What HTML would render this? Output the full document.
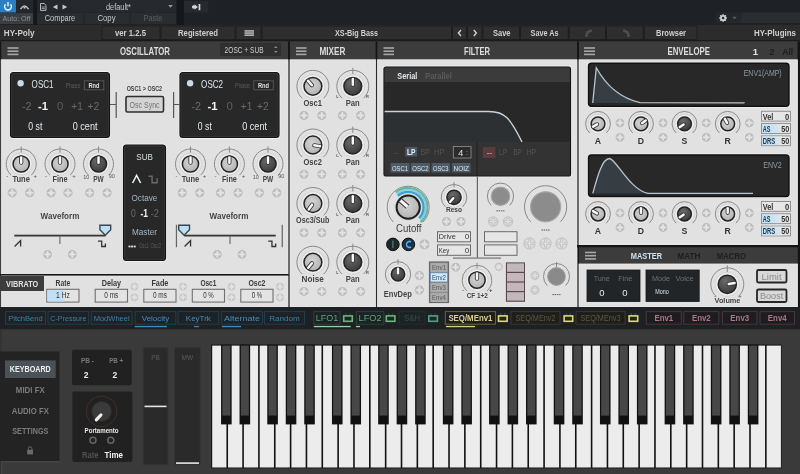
<!DOCTYPE html><html><head><meta charset="utf-8"><style>html,body{margin:0;padding:0;background:#3a3a3a;}svg{display:block;will-change:transform;font-family:"Liberation Sans",sans-serif;}</style></head><body><svg width="800" height="474" viewBox="0 0 800 474"><defs><radialGradient id="gl" cx="0.45" cy="0.4" r="0.75"><stop offset="0" stop-color="#d4d4d4"/><stop offset="1" stop-color="#aaaaaa"/></radialGradient><linearGradient id="gb" x1="0" x2="1" y1="0" y2="0"><stop offset="0" stop-color="#bfe0f7"/><stop offset="0.55" stop-color="#c8e3f5"/><stop offset="1" stop-color="#e6e6e6"/></linearGradient><radialGradient id="gd" cx="0.4" cy="0.3" r="0.8"><stop offset="0" stop-color="#6a6a6a"/><stop offset="1" stop-color="#363636"/></radialGradient></defs><rect x="0" y="0" width="800" height="474" fill="#3a3a3a"/>
<rect x="0" y="0" width="800" height="25" fill="#1e2226"/>
<rect x="0" y="0" width="16" height="12.5" fill="#2a7fc2"/>
<path d="M5.6,4.2 A3.4,3.4 0 1 0 10.4,4.2" fill="none" stroke="#eaf4fb" stroke-width="1.4"/>
<rect x="7.3" y="2" width="1.4" height="4.2" fill="#eaf4fb"/>
<rect x="16" y="0" width="17" height="12.5" fill="#24282c"/>
<path d="M20.5,9.2 Q24.5,2.6 28.5,9.2" fill="none" stroke="#c8c8c8" stroke-width="1.4"/>
<circle cx="24.5" cy="7.6" r="1.1" fill="#c8c8c8"/>
<rect x="0" y="13" width="33" height="11" fill="#3a3e41"/>
<text x="16.5" y="21.2" font-size="7.5" fill="#8c9094" font-weight="normal" text-anchor="middle" textLength="28" lengthAdjust="spacingAndGlyphs">Auto: Off</text>
<rect x="33.5" y="0" width="3.5" height="25" fill="#15181b"/>
<rect x="37" y="0" width="33" height="12.5" fill="#24282c"/>
<path d="M40.5,3.5 h3.6 l1.9,1.9 v5 h-5.5 z" fill="none" stroke="#b8b8b8" stroke-width="1"/>
<rect x="41.6" y="6.6" width="3.3" height="0.8" fill="#b8b8b8"/>
<rect x="41.6" y="8.3" width="3.3" height="0.8" fill="#b8b8b8"/>
<path d="M52.8,6.9 l4.7,-2.5 v5 z" fill="#c8c8c8"/>
<path d="M67.2,6.9 l-4.7,-2.5 v5 z" fill="#c8c8c8"/>
<rect x="70.5" y="0" width="106" height="12.5" fill="#262a2e"/>
<text x="118.5" y="9.6" font-size="8.5" fill="#c8c8c8" font-weight="normal" text-anchor="middle" textLength="25" lengthAdjust="spacingAndGlyphs">default*</text>
<path d="M168.2,5 h4.6 l-2.3,2.8 z" fill="#9a9a9a"/>
<rect x="37" y="13" width="46.5" height="11" fill="#292d30"/>
<text x="60" y="21.4" font-size="8.5" fill="#c9c9c9" font-weight="normal" text-anchor="middle" textLength="30.5" lengthAdjust="spacingAndGlyphs">Compare</text>
<rect x="84.5" y="13" width="45" height="11" fill="#292d30"/>
<text x="106.5" y="21.4" font-size="8.5" fill="#c9c9c9" font-weight="normal" text-anchor="middle" textLength="18" lengthAdjust="spacingAndGlyphs">Copy</text>
<rect x="130.5" y="13" width="46" height="11" fill="#292d30"/>
<text x="153" y="21.4" font-size="8.5" fill="#5a5e61" font-weight="normal" text-anchor="middle" textLength="19" lengthAdjust="spacingAndGlyphs">Paste</text>
<rect x="176.5" y="0" width="7.5" height="25" fill="#15181b"/>
<rect x="184" y="1" width="24.2" height="11.7" fill="#262a2e"/>
<circle cx="193.6" cy="7" r="1.7" fill="#d8d8d8"/>
<path d="M194.5,4.2 l3.4,2.8 l-3.4,2.8 z" fill="#d8d8d8"/>
<rect x="198.6" y="4" width="1.7" height="6.2" fill="#d8d8d8"/>
<rect x="716" y="12.5" width="25" height="10.5" fill="#24282c"/>
<circle cx="723.1" cy="18" r="2.2" fill="none" stroke="#cfcfcf" stroke-width="1.8"/>
<circle cx="723.1" cy="14.7" r="0.75" fill="#cfcfcf"/>
<circle cx="725.43" cy="15.67" r="0.75" fill="#cfcfcf"/>
<circle cx="726.4" cy="18.0" r="0.75" fill="#cfcfcf"/>
<circle cx="725.43" cy="20.33" r="0.75" fill="#cfcfcf"/>
<circle cx="723.1" cy="21.3" r="0.75" fill="#cfcfcf"/>
<circle cx="720.77" cy="20.33" r="0.75" fill="#cfcfcf"/>
<circle cx="719.8" cy="18.0" r="0.75" fill="#cfcfcf"/>
<circle cx="720.77" cy="15.67" r="0.75" fill="#cfcfcf"/>
<circle cx="723.1" cy="18" r="0.9" fill="#24282c"/>
<path d="M732.5,16.8 h4 l-2,2.4 z" fill="#5e6266"/>
<rect x="741.3" y="12.5" width="58.7" height="10.5" fill="#2a2e31"/>
<rect x="0" y="25" width="800" height="16" fill="#2c2c2c"/>
<rect x="0" y="40" width="800" height="1.5" fill="#1a1a1a"/>
<text x="3.8" y="36" font-size="9.3" fill="#cfcfcf" font-weight="bold" text-anchor="start" textLength="30.8" lengthAdjust="spacingAndGlyphs">HY-Poly</text>
<rect x="102.0" y="26" width="58.0" height="13.5" fill="#2e2e2e" stroke="#1e1e1e" stroke-width="1"/>
<rect x="161.0" y="26" width="74.0" height="13.5" fill="#2e2e2e" stroke="#1e1e1e" stroke-width="1"/>
<rect x="236.0" y="26" width="25.0" height="13.5" fill="#2e2e2e" stroke="#1e1e1e" stroke-width="1"/>
<rect x="262.0" y="26" width="189.5" height="13.5" fill="#2e2e2e" stroke="#1e1e1e" stroke-width="1"/>
<rect x="452.5" y="26" width="14" height="13.5" fill="#2e2e2e" stroke="#1e1e1e" stroke-width="1"/>
<rect x="467.5" y="26" width="14.5" height="13.5" fill="#2e2e2e" stroke="#1e1e1e" stroke-width="1"/>
<rect x="483.0" y="26" width="36.5" height="13.5" fill="#2e2e2e" stroke="#1e1e1e" stroke-width="1"/>
<rect x="520.5" y="26" width="47.75" height="13.5" fill="#2e2e2e" stroke="#1e1e1e" stroke-width="1"/>
<rect x="569.25" y="26" width="36.25" height="13.5" fill="#2e2e2e" stroke="#1e1e1e" stroke-width="1"/>
<rect x="606.5" y="26" width="36.75" height="13.5" fill="#2e2e2e" stroke="#1e1e1e" stroke-width="1"/>
<rect x="644.25" y="26" width="52.75" height="13.5" fill="#2e2e2e" stroke="#1e1e1e" stroke-width="1"/>
<text x="130.5" y="36.2" font-size="9.2" fill="#cfcfcf" font-weight="bold" text-anchor="middle" textLength="31" lengthAdjust="spacingAndGlyphs">ver 1.2.5</text>
<text x="198" y="36.2" font-size="9.2" fill="#cfcfcf" font-weight="bold" text-anchor="middle" textLength="40" lengthAdjust="spacingAndGlyphs">Registered</text>
<rect x="244.5" y="30.3" width="9.5" height="1.3" fill="#d2d2d2"/>
<rect x="244.5" y="32.4" width="9.5" height="1.3" fill="#d2d2d2"/>
<rect x="244.5" y="34.5" width="9.5" height="1.3" fill="#d2d2d2"/>
<text x="356.5" y="36.2" font-size="9.2" fill="#cfcfcf" font-weight="bold" text-anchor="middle" textLength="43" lengthAdjust="spacingAndGlyphs">XS-Big Bass</text>
<path d="M461,30 l-2.6,3 l2.6,3" fill="none" stroke="#d0d0d0" stroke-width="1.4"/>
<path d="M473.8,30 l2.6,3 l-2.6,3" fill="none" stroke="#d0d0d0" stroke-width="1.4"/>
<text x="501.75" y="36.2" font-size="9.2" fill="#cfcfcf" font-weight="bold" text-anchor="middle" textLength="17.5" lengthAdjust="spacingAndGlyphs">Save</text>
<text x="544.6" y="36.2" font-size="9.2" fill="#cfcfcf" font-weight="bold" text-anchor="middle" textLength="28" lengthAdjust="spacingAndGlyphs">Save As</text>
<path d="M586.5,37 q-0.5,-6 5.5,-6.5" fill="none" stroke="#4e4e4e" stroke-width="2.6"/>
<path d="M628.5,37 q0.5,-6 -5.5,-6.5" fill="none" stroke="#4e4e4e" stroke-width="2.6"/>
<text x="671" y="36.2" font-size="9.2" fill="#cfcfcf" font-weight="bold" text-anchor="middle" textLength="30" lengthAdjust="spacingAndGlyphs">Browser</text>
<text x="796" y="36.2" font-size="9.2" fill="#cfcfcf" font-weight="bold" text-anchor="end" textLength="42" lengthAdjust="spacingAndGlyphs">HY-Plugins</text>
<rect x="0" y="41.5" width="800" height="18" fill="#3c3c3c"/>
<rect x="288" y="41.5" width="2" height="266" fill="#151515"/>
<rect x="375.6" y="41.5" width="1.6999999999999886" height="266" fill="#151515"/>
<rect x="577" y="41.5" width="2" height="266" fill="#151515"/>
<rect x="0" y="41.5" width="1.2" height="266" fill="#151515"/>
<rect x="797.5" y="41.5" width="2.5" height="266" fill="#151515"/>
<rect x="7.5" y="47.2" width="11" height="1.6" fill="#a8a8a8"/>
<rect x="7.5" y="50.400000000000006" width="11" height="1.6" fill="#a8a8a8"/>
<rect x="7.5" y="53.6" width="11" height="1.6" fill="#a8a8a8"/>
<text x="145" y="55" font-size="10" fill="#dedede" font-weight="bold" text-anchor="middle" textLength="50" lengthAdjust="spacingAndGlyphs">OSCILLATOR</text>
<rect x="220" y="43" width="61" height="13" fill="#2f2f2f"/>
<text x="244.1" y="53" font-size="8.5" fill="#cfcfcf" font-weight="normal" text-anchor="middle" textLength="39" lengthAdjust="spacingAndGlyphs">2OSC + SUB</text>
<path d="M274,48 l1.8,-2 l1.8,2 z M274,51 l1.8,2 l1.8,-2 z" fill="#888"/>
<rect x="296" y="47.2" width="10.5" height="1.6" fill="#a8a8a8"/>
<rect x="296" y="50.400000000000006" width="10.5" height="1.6" fill="#a8a8a8"/>
<rect x="296" y="53.6" width="10.5" height="1.6" fill="#a8a8a8"/>
<text x="332.5" y="55" font-size="10" fill="#dedede" font-weight="bold" text-anchor="middle" textLength="26" lengthAdjust="spacingAndGlyphs">MIXER</text>
<rect x="383.5" y="47.2" width="10.5" height="1.6" fill="#a8a8a8"/>
<rect x="383.5" y="50.400000000000006" width="10.5" height="1.6" fill="#a8a8a8"/>
<rect x="383.5" y="53.6" width="10.5" height="1.6" fill="#a8a8a8"/>
<text x="477" y="55" font-size="10" fill="#dedede" font-weight="bold" text-anchor="middle" textLength="26" lengthAdjust="spacingAndGlyphs">FILTER</text>
<rect x="584" y="47.2" width="11" height="1.6" fill="#a8a8a8"/>
<rect x="584" y="50.400000000000006" width="11" height="1.6" fill="#a8a8a8"/>
<rect x="584" y="53.6" width="11" height="1.6" fill="#a8a8a8"/>
<text x="688.75" y="55" font-size="10" fill="#dedede" font-weight="bold" text-anchor="middle" textLength="42.5" lengthAdjust="spacingAndGlyphs">ENVELOPE</text>
<text x="755.5" y="55" font-size="9.5" fill="#d6e8f4" font-weight="bold" text-anchor="middle">1</text>
<text x="772" y="55" font-size="9.5" fill="#1f1f1f" font-weight="bold" text-anchor="middle">2</text>
<text x="787.75" y="55" font-size="9.5" fill="#1f1f1f" font-weight="bold" text-anchor="middle" textLength="11" lengthAdjust="spacingAndGlyphs">All</text>
<rect x="1.2" y="59.8" width="286.8" height="214.2" fill="#e1e1e1" stroke="#ececec" stroke-width="0.8"/>
<rect x="290" y="59.8" width="85.6" height="247.2" fill="#e1e1e1" stroke="#ececec" stroke-width="0.8"/>
<rect x="377.3" y="59.8" width="199.7" height="247.2" fill="#e1e1e1" stroke="#ececec" stroke-width="0.8"/>
<rect x="579" y="59.8" width="218.5" height="185.2" fill="#e1e1e1" stroke="#ececec" stroke-width="0.8"/>
<rect x="0" y="274" width="288" height="2" fill="#151515"/>
<rect x="1.2" y="276" width="286.8" height="31" fill="#e1e1e1" stroke="#ececec" stroke-width="0.8"/>
<rect x="577" y="245" width="221" height="2.5" fill="#151515"/>
<rect x="579" y="247.5" width="218.5" height="16.5" fill="#3c3c3c"/>
<rect x="579" y="264" width="218.5" height="43" fill="#e1e1e1" stroke="#ececec" stroke-width="0.8"/>
<rect x="0" y="307" width="800" height="22.3" fill="#1e2124"/>
<rect x="9.6" y="71.6" width="100.8" height="66.8" fill="none" stroke="#f6f6f6" stroke-width="0.9" rx="3.8"/>
<rect x="10.5" y="72.5" width="99" height="65" fill="#282828" stroke="#141414" stroke-width="1.2" rx="3"/>
<rect x="11.6" y="73.6" width="96.8" height="62.8" fill="none" stroke="#383838" stroke-width="0.8" rx="2.2"/>
<circle cx="20.6" cy="83.3" r="3.2" fill="#c9dbe6"/>
<text x="31.6" y="87.6" font-size="10.5" fill="#dfe6ea" font-weight="normal" text-anchor="start" textLength="22" lengthAdjust="spacingAndGlyphs">OSC1</text>
<text x="65.4" y="88" font-size="6.5" fill="#5b5b5b" font-weight="normal" text-anchor="start" textLength="15" lengthAdjust="spacingAndGlyphs">Phase</text>
<rect x="84.3" y="80.8" width="19.5" height="9" fill="#262626" stroke="#5a5a5a" stroke-width="0.9"/>
<text x="94.0" y="87.8" font-size="7" fill="#e2e2e2" font-weight="bold" text-anchor="middle" textLength="11" lengthAdjust="spacingAndGlyphs">Rnd</text>
<text x="26.8" y="109.6" font-size="11.5" fill="#6a6a6a" font-weight="normal" text-anchor="middle" textLength="9.6" lengthAdjust="spacingAndGlyphs">-2</text>
<text x="43.0" y="109.6" font-size="11.5" fill="#f2f2f2" font-weight="bold" text-anchor="middle" textLength="10" lengthAdjust="spacingAndGlyphs">-1</text>
<text x="60.2" y="109.6" font-size="11.5" fill="#5e5e5e" font-weight="normal" text-anchor="middle" textLength="6.3" lengthAdjust="spacingAndGlyphs">0</text>
<text x="77.0" y="109.6" font-size="11.5" fill="#6a6a6a" font-weight="normal" text-anchor="middle" textLength="11.4" lengthAdjust="spacingAndGlyphs">+1</text>
<text x="93.4" y="109.6" font-size="11.5" fill="#6a6a6a" font-weight="normal" text-anchor="middle" textLength="11.7" lengthAdjust="spacingAndGlyphs">+2</text>
<text x="35.3" y="129.8" font-size="10.5" fill="#e6ecf0" font-weight="normal" text-anchor="middle" textLength="14" lengthAdjust="spacingAndGlyphs">0 st</text>
<text x="85.1" y="129.8" font-size="10.5" fill="#e6ecf0" font-weight="normal" text-anchor="middle" textLength="24.7" lengthAdjust="spacingAndGlyphs">0 cent</text>
<rect x="179.1" y="71.6" width="100.8" height="66.8" fill="none" stroke="#f6f6f6" stroke-width="0.9" rx="3.8"/>
<rect x="180" y="72.5" width="99" height="65" fill="#282828" stroke="#141414" stroke-width="1.2" rx="3"/>
<rect x="181.1" y="73.6" width="96.8" height="62.8" fill="none" stroke="#383838" stroke-width="0.8" rx="2.2"/>
<circle cx="190.1" cy="83.3" r="3.2" fill="#c9dbe6"/>
<text x="201.1" y="87.6" font-size="10.5" fill="#dfe6ea" font-weight="normal" text-anchor="start" textLength="22" lengthAdjust="spacingAndGlyphs">OSC2</text>
<text x="234.9" y="88" font-size="6.5" fill="#5b5b5b" font-weight="normal" text-anchor="start" textLength="15" lengthAdjust="spacingAndGlyphs">Phase</text>
<rect x="253.8" y="80.8" width="19.5" height="9" fill="#262626" stroke="#5a5a5a" stroke-width="0.9"/>
<text x="263.5" y="87.8" font-size="7" fill="#e2e2e2" font-weight="bold" text-anchor="middle" textLength="11" lengthAdjust="spacingAndGlyphs">Rnd</text>
<text x="196.3" y="109.6" font-size="11.5" fill="#6a6a6a" font-weight="normal" text-anchor="middle" textLength="9.6" lengthAdjust="spacingAndGlyphs">-2</text>
<text x="212.5" y="109.6" font-size="11.5" fill="#f2f2f2" font-weight="bold" text-anchor="middle" textLength="10" lengthAdjust="spacingAndGlyphs">-1</text>
<text x="229.7" y="109.6" font-size="11.5" fill="#5e5e5e" font-weight="normal" text-anchor="middle" textLength="6.3" lengthAdjust="spacingAndGlyphs">0</text>
<text x="246.5" y="109.6" font-size="11.5" fill="#6a6a6a" font-weight="normal" text-anchor="middle" textLength="11.4" lengthAdjust="spacingAndGlyphs">+1</text>
<text x="262.9" y="109.6" font-size="11.5" fill="#6a6a6a" font-weight="normal" text-anchor="middle" textLength="11.7" lengthAdjust="spacingAndGlyphs">+2</text>
<text x="204.8" y="129.8" font-size="10.5" fill="#e6ecf0" font-weight="normal" text-anchor="middle" textLength="14" lengthAdjust="spacingAndGlyphs">0 st</text>
<text x="254.6" y="129.8" font-size="10.5" fill="#e6ecf0" font-weight="normal" text-anchor="middle" textLength="24.7" lengthAdjust="spacingAndGlyphs">0 cent</text>
<rect x="110" y="104" width="6" height="1" fill="#555"/>
<rect x="115.6" y="92" width="1.2" height="26" fill="#555"/>
<rect x="173" y="92" width="1.2" height="26" fill="#555"/>
<rect x="174" y="104" width="6" height="1" fill="#555"/>
<text x="144.4" y="91.2" font-size="7" fill="#3e3e3e" font-weight="bold" text-anchor="middle" textLength="35.4" lengthAdjust="spacingAndGlyphs">OSC1 &gt; OSC2</text>
<rect x="126" y="96.5" width="37.5" height="15.5" fill="#d4d4d4" stroke="#2e2e2e" stroke-width="1.6" rx="1.5"/>
<text x="144.6" y="107.6" font-size="9" fill="#707070" font-weight="normal" text-anchor="middle" textLength="30" lengthAdjust="spacingAndGlyphs">Osc Sync</text>
<path d="M11.16,175.15 A15,15 0 1 1 31.24,175.15" fill="none" stroke="#8a8a8a" stroke-width="1"/>
<line x1="21.2" y1="146.5" x2="21.2" y2="153.7" stroke="#8a8a8a" stroke-width="1"/>
<circle cx="21.2" cy="164" r="11.4" fill="#d2d2d2"/>
<circle cx="21.2" cy="164" r="10.600000000000001" fill="#ececec"/>
<circle cx="21.2" cy="164" r="8.100000000000001" fill="url(#gl)" stroke="#252525" stroke-width="1.5"/>
<line x1="21.20" y1="162.68" x2="21.20" y2="157.40" stroke="#333" stroke-width="4.2" stroke-linecap="round"/>
<line x1="21.20" y1="162.68" x2="21.20" y2="157.40" stroke="#f8f8f8" stroke-width="2.5" stroke-linecap="round"/>
<text x="21.2" y="181.5" font-size="8.4" fill="#444" font-weight="bold" text-anchor="middle" textLength="17.5" lengthAdjust="spacingAndGlyphs">Tune</text>
<text x="7.199999999999999" y="177.5" font-size="6" fill="#555" font-weight="normal" text-anchor="middle">-</text>
<text x="35.2" y="177.5" font-size="6" fill="#555" font-weight="normal" text-anchor="middle">+</text>
<path d="M49.96,175.15 A15,15 0 1 1 70.04,175.15" fill="none" stroke="#8a8a8a" stroke-width="1"/>
<line x1="60" y1="146.5" x2="60" y2="153.7" stroke="#8a8a8a" stroke-width="1"/>
<circle cx="60" cy="164" r="11.4" fill="#d2d2d2"/>
<circle cx="60" cy="164" r="10.600000000000001" fill="#ececec"/>
<circle cx="60" cy="164" r="8.100000000000001" fill="url(#gl)" stroke="#252525" stroke-width="1.5"/>
<line x1="60.00" y1="162.68" x2="60.00" y2="157.40" stroke="#333" stroke-width="4.2" stroke-linecap="round"/>
<line x1="60.00" y1="162.68" x2="60.00" y2="157.40" stroke="#f8f8f8" stroke-width="2.5" stroke-linecap="round"/>
<text x="60" y="181.5" font-size="8.4" fill="#444" font-weight="bold" text-anchor="middle" textLength="15" lengthAdjust="spacingAndGlyphs">Fine</text>
<text x="46" y="177.5" font-size="6" fill="#555" font-weight="normal" text-anchor="middle">-</text>
<text x="74" y="177.5" font-size="6" fill="#555" font-weight="normal" text-anchor="middle">+</text>
<path d="M88.46,175.15 A15,15 0 1 1 108.54,175.15" fill="none" stroke="#8a8a8a" stroke-width="1"/>
<line x1="98.5" y1="146.5" x2="98.5" y2="153.7" stroke="#8a8a8a" stroke-width="1"/>
<circle cx="98.5" cy="164" r="11.4" fill="#d2d2d2"/>
<circle cx="98.5" cy="164" r="10.600000000000001" fill="#ececec"/>
<circle cx="98.5" cy="164" r="8.100000000000001" fill="url(#gd)" stroke="#252525" stroke-width="1.5"/>
<line x1="98.50" y1="162.68" x2="98.50" y2="157.40" stroke="#333" stroke-width="4.2" stroke-linecap="round"/>
<line x1="98.50" y1="162.68" x2="98.50" y2="157.40" stroke="#f8f8f8" stroke-width="2.5" stroke-linecap="round"/>
<text x="98.5" y="181.5" font-size="8.4" fill="#444" font-weight="bold" text-anchor="middle" textLength="10.5" lengthAdjust="spacingAndGlyphs">PW</text>
<text x="86.2" y="178.5" font-size="5.5" fill="#555" font-weight="normal" text-anchor="middle">10</text>
<text x="111.7" y="177.5" font-size="5.5" fill="#555" font-weight="normal" text-anchor="middle">90</text>
<path d="M180.46,175.15 A15,15 0 1 1 200.54,175.15" fill="none" stroke="#8a8a8a" stroke-width="1"/>
<line x1="190.5" y1="146.5" x2="190.5" y2="153.7" stroke="#8a8a8a" stroke-width="1"/>
<circle cx="190.5" cy="164" r="11.4" fill="#d2d2d2"/>
<circle cx="190.5" cy="164" r="10.600000000000001" fill="#ececec"/>
<circle cx="190.5" cy="164" r="8.100000000000001" fill="url(#gl)" stroke="#252525" stroke-width="1.5"/>
<line x1="190.50" y1="162.68" x2="190.50" y2="157.40" stroke="#333" stroke-width="4.2" stroke-linecap="round"/>
<line x1="190.50" y1="162.68" x2="190.50" y2="157.40" stroke="#f8f8f8" stroke-width="2.5" stroke-linecap="round"/>
<text x="190.5" y="181.5" font-size="8.4" fill="#444" font-weight="bold" text-anchor="middle" textLength="17.5" lengthAdjust="spacingAndGlyphs">Tune</text>
<text x="176.5" y="177.5" font-size="6" fill="#555" font-weight="normal" text-anchor="middle">-</text>
<text x="204.5" y="177.5" font-size="6" fill="#555" font-weight="normal" text-anchor="middle">+</text>
<path d="M219.36,175.15 A15,15 0 1 1 239.44,175.15" fill="none" stroke="#8a8a8a" stroke-width="1"/>
<line x1="229.4" y1="146.5" x2="229.4" y2="153.7" stroke="#8a8a8a" stroke-width="1"/>
<circle cx="229.4" cy="164" r="11.4" fill="#d2d2d2"/>
<circle cx="229.4" cy="164" r="10.600000000000001" fill="#ececec"/>
<circle cx="229.4" cy="164" r="8.100000000000001" fill="url(#gl)" stroke="#252525" stroke-width="1.5"/>
<line x1="229.40" y1="162.68" x2="229.40" y2="157.40" stroke="#333" stroke-width="4.2" stroke-linecap="round"/>
<line x1="229.40" y1="162.68" x2="229.40" y2="157.40" stroke="#f8f8f8" stroke-width="2.5" stroke-linecap="round"/>
<text x="229.4" y="181.5" font-size="8.4" fill="#444" font-weight="bold" text-anchor="middle" textLength="15" lengthAdjust="spacingAndGlyphs">Fine</text>
<text x="215.4" y="177.5" font-size="6" fill="#555" font-weight="normal" text-anchor="middle">-</text>
<text x="243.4" y="177.5" font-size="6" fill="#555" font-weight="normal" text-anchor="middle">+</text>
<path d="M257.96,175.15 A15,15 0 1 1 278.04,175.15" fill="none" stroke="#8a8a8a" stroke-width="1"/>
<line x1="268" y1="146.5" x2="268" y2="153.7" stroke="#8a8a8a" stroke-width="1"/>
<circle cx="268" cy="164" r="11.4" fill="#d2d2d2"/>
<circle cx="268" cy="164" r="10.600000000000001" fill="#ececec"/>
<circle cx="268" cy="164" r="8.100000000000001" fill="url(#gd)" stroke="#252525" stroke-width="1.5"/>
<line x1="268.00" y1="162.68" x2="268.00" y2="157.40" stroke="#333" stroke-width="4.2" stroke-linecap="round"/>
<line x1="268.00" y1="162.68" x2="268.00" y2="157.40" stroke="#f8f8f8" stroke-width="2.5" stroke-linecap="round"/>
<text x="268" y="181.5" font-size="8.4" fill="#444" font-weight="bold" text-anchor="middle" textLength="10.5" lengthAdjust="spacingAndGlyphs">PW</text>
<text x="255.7" y="178.5" font-size="5.5" fill="#555" font-weight="normal" text-anchor="middle">10</text>
<text x="281.2" y="177.5" font-size="5.5" fill="#555" font-weight="normal" text-anchor="middle">90</text>
<circle cx="12.2" cy="192.8" r="3.5999999999999996" fill="#d0d0d0" stroke="#bcbcbc" stroke-width="2"/>
<rect x="11.45" y="189.2" width="1.5" height="7.2" fill="#e4e4e4"/>
<rect x="8.6" y="192.05" width="7.2" height="1.5" fill="#e4e4e4"/>
<circle cx="29.7" cy="192.8" r="3.5999999999999996" fill="#d0d0d0" stroke="#bcbcbc" stroke-width="2"/>
<rect x="28.95" y="189.2" width="1.5" height="7.2" fill="#e4e4e4"/>
<rect x="26.1" y="192.05" width="7.2" height="1.5" fill="#e4e4e4"/>
<circle cx="51.1" cy="192.8" r="3.5999999999999996" fill="#d0d0d0" stroke="#bcbcbc" stroke-width="2"/>
<rect x="50.35" y="189.2" width="1.5" height="7.2" fill="#e4e4e4"/>
<rect x="47.5" y="192.05" width="7.2" height="1.5" fill="#e4e4e4"/>
<circle cx="68" cy="192.8" r="3.5999999999999996" fill="#d0d0d0" stroke="#bcbcbc" stroke-width="2"/>
<rect x="67.25" y="189.2" width="1.5" height="7.2" fill="#e4e4e4"/>
<rect x="64.4" y="192.05" width="7.2" height="1.5" fill="#e4e4e4"/>
<circle cx="89.7" cy="192.8" r="3.5999999999999996" fill="#d0d0d0" stroke="#bcbcbc" stroke-width="2"/>
<rect x="88.95" y="189.2" width="1.5" height="7.2" fill="#e4e4e4"/>
<rect x="86.1" y="192.05" width="7.2" height="1.5" fill="#e4e4e4"/>
<circle cx="107.1" cy="192.8" r="3.5999999999999996" fill="#d0d0d0" stroke="#bcbcbc" stroke-width="2"/>
<rect x="106.35" y="189.2" width="1.5" height="7.2" fill="#e4e4e4"/>
<rect x="103.5" y="192.05" width="7.2" height="1.5" fill="#e4e4e4"/>
<circle cx="182.2" cy="192.8" r="3.5999999999999996" fill="#d0d0d0" stroke="#bcbcbc" stroke-width="2"/>
<rect x="181.45" y="189.2" width="1.5" height="7.2" fill="#e4e4e4"/>
<rect x="178.6" y="192.05" width="7.2" height="1.5" fill="#e4e4e4"/>
<circle cx="199.7" cy="192.8" r="3.5999999999999996" fill="#d0d0d0" stroke="#bcbcbc" stroke-width="2"/>
<rect x="198.95" y="189.2" width="1.5" height="7.2" fill="#e4e4e4"/>
<rect x="196.1" y="192.05" width="7.2" height="1.5" fill="#e4e4e4"/>
<circle cx="220.5" cy="192.8" r="3.5999999999999996" fill="#d0d0d0" stroke="#bcbcbc" stroke-width="2"/>
<rect x="219.75" y="189.2" width="1.5" height="7.2" fill="#e4e4e4"/>
<rect x="216.9" y="192.05" width="7.2" height="1.5" fill="#e4e4e4"/>
<circle cx="238" cy="192.8" r="3.5999999999999996" fill="#d0d0d0" stroke="#bcbcbc" stroke-width="2"/>
<rect x="237.25" y="189.2" width="1.5" height="7.2" fill="#e4e4e4"/>
<rect x="234.4" y="192.05" width="7.2" height="1.5" fill="#e4e4e4"/>
<circle cx="259.4" cy="192.8" r="3.5999999999999996" fill="#d0d0d0" stroke="#bcbcbc" stroke-width="2"/>
<rect x="258.65" y="189.2" width="1.5" height="7.2" fill="#e4e4e4"/>
<rect x="255.8" y="192.05" width="7.2" height="1.5" fill="#e4e4e4"/>
<circle cx="276.8" cy="192.8" r="3.5999999999999996" fill="#d0d0d0" stroke="#bcbcbc" stroke-width="2"/>
<rect x="276.05" y="189.2" width="1.5" height="7.2" fill="#e4e4e4"/>
<rect x="273.2" y="192.05" width="7.2" height="1.5" fill="#e4e4e4"/>
<text x="60" y="218.8" font-size="8.8" fill="#454545" font-weight="bold" text-anchor="middle" textLength="38.8" lengthAdjust="spacingAndGlyphs">Waveform</text>
<text x="229" y="218.8" font-size="8.8" fill="#454545" font-weight="bold" text-anchor="middle" textLength="38.8" lengthAdjust="spacingAndGlyphs">Waveform</text>
<rect x="14.3" y="234.7" width="91.2" height="1.8" fill="#363636"/>
<rect x="59.3" y="236" width="1.2" height="8" fill="#707070"/>
<path d="M14.600000000000001,246.5 l6,-6 v6" fill="none" stroke="#333" stroke-width="1.3"/>
<path d="M98.0,241.2 h3.7 v5.3 h3.7 v-3" fill="none" stroke="#333" stroke-width="1.3"/>
<path d="M99.89999999999999,225.2 h10.8 v4.6 l-5.4,5.4 l-5.4,-5.4 z" fill="#bde0f7" stroke="#3a4650" stroke-width="1.4"/>
<rect x="184.25" y="234.7" width="91.5" height="1.8" fill="#363636"/>
<rect x="229.4" y="236" width="1.2" height="8" fill="#707070"/>
<path d="M184.55,246.5 l6,-6 v6" fill="none" stroke="#333" stroke-width="1.3"/>
<path d="M268.25,241.2 h3.7 v5.3 h3.7 v-3" fill="none" stroke="#333" stroke-width="1.3"/>
<path d="M178.7,225.2 h10.8 v4.6 l-5.4,5.4 l-5.4,-5.4 z" fill="#bde0f7" stroke="#3a4650" stroke-width="1.4"/>
<rect x="175.85" y="224.75" width="1.2" height="22.5" fill="#666"/>
<rect x="281.65" y="224.75" width="1.2" height="22.5" fill="#666"/>
<circle cx="47.6" cy="254.4" r="3.4000000000000004" fill="#d0d0d0" stroke="#bcbcbc" stroke-width="2"/>
<rect x="46.85" y="251.0" width="1.5" height="6.8" fill="#e4e4e4"/>
<rect x="44.2" y="253.65" width="6.8" height="1.5" fill="#e4e4e4"/>
<circle cx="72.2" cy="254.4" r="3.4000000000000004" fill="#d0d0d0" stroke="#bcbcbc" stroke-width="2"/>
<rect x="71.45" y="251.0" width="1.5" height="6.8" fill="#e4e4e4"/>
<rect x="68.8" y="253.65" width="6.8" height="1.5" fill="#e4e4e4"/>
<circle cx="217.25" cy="254.4" r="3.4000000000000004" fill="#d0d0d0" stroke="#bcbcbc" stroke-width="2"/>
<rect x="216.5" y="251.0" width="1.5" height="6.8" fill="#e4e4e4"/>
<rect x="213.85" y="253.65" width="6.8" height="1.5" fill="#e4e4e4"/>
<circle cx="242" cy="254.4" r="3.4000000000000004" fill="#d0d0d0" stroke="#bcbcbc" stroke-width="2"/>
<rect x="241.25" y="251.0" width="1.5" height="6.8" fill="#e4e4e4"/>
<rect x="238.6" y="253.65" width="6.8" height="1.5" fill="#e4e4e4"/>
<rect x="122.6" y="144.1" width="43.8" height="117.3" fill="none" stroke="#f6f6f6" stroke-width="0.9" rx="3.8"/>
<rect x="123.5" y="145" width="42" height="115.5" fill="#282828" stroke="#141414" stroke-width="1.2" rx="3"/>
<rect x="124.6" y="146.1" width="39.8" height="113.3" fill="none" stroke="#383838" stroke-width="0.8" rx="2.2"/>
<text x="144.6" y="159.6" font-size="8.8" fill="#d4e0e8" font-weight="normal" text-anchor="middle" textLength="16.5" lengthAdjust="spacingAndGlyphs">SUB</text>
<path d="M132.6,183 l4,-7.6 l4,7.6" fill="none" stroke="#eef3f6" stroke-width="1.5"/>
<path d="M148.5,176.2 h3.6 v6.6 h5 v-4.5" fill="none" stroke="#6a6a6a" stroke-width="1.4"/>
<text x="144.4" y="200.7" font-size="9.5" fill="#a4b8c6" font-weight="normal" text-anchor="middle" textLength="25.7" lengthAdjust="spacingAndGlyphs">Octave</text>
<text x="133.4" y="216.7" font-size="11" fill="#6a6a6a" font-weight="normal" text-anchor="middle" textLength="4.8" lengthAdjust="spacingAndGlyphs">0</text>
<text x="144.2" y="216.7" font-size="11" fill="#f4f4f4" font-weight="bold" text-anchor="middle" textLength="7.5" lengthAdjust="spacingAndGlyphs">-1</text>
<text x="154.9" y="216.7" font-size="11" fill="#6a6a6a" font-weight="normal" text-anchor="middle" textLength="8.2" lengthAdjust="spacingAndGlyphs">-2</text>
<text x="144.5" y="234.5" font-size="9.5" fill="#a4b8c6" font-weight="normal" text-anchor="middle" textLength="25" lengthAdjust="spacingAndGlyphs">Master</text>
<rect x="128.5" y="245.6" width="2" height="1.8" fill="#e4e4e4"/>
<rect x="131.1" y="245.6" width="2" height="1.8" fill="#e4e4e4"/>
<rect x="133.7" y="245.6" width="2" height="1.8" fill="#e4e4e4"/>
<text x="139.2" y="248.2" font-size="6.5" fill="#5a5a5a" font-weight="normal" text-anchor="start" textLength="9.5" lengthAdjust="spacingAndGlyphs">Osc1</text>
<text x="150.5" y="248.2" font-size="6.5" fill="#5a5a5a" font-weight="normal" text-anchor="start" textLength="10.5" lengthAdjust="spacingAndGlyphs">Osc2</text>
<rect x="0" y="276" width="44" height="15" fill="#3c3c3c"/>
<text x="22.1" y="286.8" font-size="9.5" fill="#e2e2e2" font-weight="bold" text-anchor="middle" textLength="32" lengthAdjust="spacingAndGlyphs">VIBRATO</text>
<text x="62.9" y="286.3" font-size="9.5" fill="#3a3a3a" font-weight="bold" text-anchor="middle" textLength="14.8" lengthAdjust="spacingAndGlyphs">Rate</text>
<rect x="46.8" y="289.3" width="32.2" height="12.8" fill="#e3e3e3" stroke="#707070" stroke-width="1.1"/>
<rect x="47.4" y="289.9" width="16.8" height="11.6" fill="#bfe0f8"/>
<text x="62.9" y="298.4" font-size="8.5" fill="#333" font-weight="normal" text-anchor="middle" textLength="14" lengthAdjust="spacingAndGlyphs">1 Hz</text>
<text x="111.35" y="286.3" font-size="9.5" fill="#3a3a3a" font-weight="bold" text-anchor="middle" textLength="19.4" lengthAdjust="spacingAndGlyphs">Delay</text>
<rect x="95.2" y="289.3" width="32.3" height="12.8" fill="#e3e3e3" stroke="#707070" stroke-width="1.1"/>
<text x="111.35" y="298.4" font-size="8.5" fill="#333" font-weight="normal" text-anchor="middle" textLength="14" lengthAdjust="spacingAndGlyphs">0 ms</text>
<text x="159.9" y="286.3" font-size="9.5" fill="#3a3a3a" font-weight="bold" text-anchor="middle" textLength="17" lengthAdjust="spacingAndGlyphs">Fade</text>
<rect x="143.8" y="289.3" width="32.19999999999999" height="12.8" fill="#e3e3e3" stroke="#707070" stroke-width="1.1"/>
<text x="159.9" y="298.4" font-size="8.5" fill="#333" font-weight="normal" text-anchor="middle" textLength="14" lengthAdjust="spacingAndGlyphs">0 ms</text>
<text x="208.4" y="286.3" font-size="9.5" fill="#3a3a3a" font-weight="bold" text-anchor="middle" textLength="16" lengthAdjust="spacingAndGlyphs">Osc1</text>
<rect x="192.3" y="289.3" width="32.19999999999999" height="12.8" fill="#e3e3e3" stroke="#707070" stroke-width="1.1"/>
<text x="208.4" y="298.4" font-size="8.5" fill="#333" font-weight="normal" text-anchor="middle" textLength="10.5" lengthAdjust="spacingAndGlyphs">0 %</text>
<text x="256.9" y="286.3" font-size="9.5" fill="#3a3a3a" font-weight="bold" text-anchor="middle" textLength="17" lengthAdjust="spacingAndGlyphs">Osc2</text>
<rect x="240.8" y="289.3" width="32.19999999999999" height="12.8" fill="#e3e3e3" stroke="#707070" stroke-width="1.1"/>
<text x="256.9" y="298.4" font-size="8.5" fill="#333" font-weight="normal" text-anchor="middle" textLength="10.5" lengthAdjust="spacingAndGlyphs">0 %</text>
<circle cx="134.4" cy="286.6" r="2.9" fill="#d0d0d0" stroke="#c8c8c8" stroke-width="2"/>
<rect x="133.65" y="283.7" width="1.5" height="5.8" fill="#e4e4e4"/>
<rect x="131.5" y="285.85" width="5.8" height="1.5" fill="#e4e4e4"/>
<circle cx="134.4" cy="297.3" r="2.9" fill="#d0d0d0" stroke="#c8c8c8" stroke-width="2"/>
<rect x="133.65" y="294.4" width="1.5" height="5.8" fill="#e4e4e4"/>
<rect x="131.5" y="296.55" width="5.8" height="1.5" fill="#e4e4e4"/>
<circle cx="183" cy="286.6" r="2.9" fill="#d0d0d0" stroke="#c8c8c8" stroke-width="2"/>
<rect x="182.25" y="283.7" width="1.5" height="5.8" fill="#e4e4e4"/>
<rect x="180.1" y="285.85" width="5.8" height="1.5" fill="#e4e4e4"/>
<circle cx="183" cy="297.3" r="2.9" fill="#d0d0d0" stroke="#c8c8c8" stroke-width="2"/>
<rect x="182.25" y="294.4" width="1.5" height="5.8" fill="#e4e4e4"/>
<rect x="180.1" y="296.55" width="5.8" height="1.5" fill="#e4e4e4"/>
<circle cx="231.5" cy="286.6" r="2.9" fill="#d0d0d0" stroke="#c8c8c8" stroke-width="2"/>
<rect x="230.75" y="283.7" width="1.5" height="5.8" fill="#e4e4e4"/>
<rect x="228.6" y="285.85" width="5.8" height="1.5" fill="#e4e4e4"/>
<circle cx="231.5" cy="297.3" r="2.9" fill="#d0d0d0" stroke="#c8c8c8" stroke-width="2"/>
<rect x="230.75" y="294.4" width="1.5" height="5.8" fill="#e4e4e4"/>
<rect x="228.6" y="296.55" width="5.8" height="1.5" fill="#e4e4e4"/>
<circle cx="280" cy="286.6" r="2.9" fill="#d0d0d0" stroke="#c8c8c8" stroke-width="2"/>
<rect x="279.25" y="283.7" width="1.5" height="5.8" fill="#e4e4e4"/>
<rect x="277.1" y="285.85" width="5.8" height="1.5" fill="#e4e4e4"/>
<circle cx="280" cy="297.3" r="2.9" fill="#d0d0d0" stroke="#c8c8c8" stroke-width="2"/>
<rect x="279.25" y="294.4" width="1.5" height="5.8" fill="#e4e4e4"/>
<rect x="277.1" y="296.55" width="5.8" height="1.5" fill="#e4e4e4"/>
<path d="M302.19,98.19 A16,16 0 1 1 323.61,98.19" fill="none" stroke="#8a8a8a" stroke-width="1"/>
<circle cx="312.9" cy="86.3" r="12.2" fill="#d2d2d2"/>
<circle cx="312.9" cy="86.3" r="11.4" fill="#ececec"/>
<circle cx="312.9" cy="86.3" r="8.9" fill="url(#gl)" stroke="#252525" stroke-width="1.5"/>
<line x1="311.94" y1="85.23" x2="308.08" y2="80.95" stroke="#333" stroke-width="4.2" stroke-linecap="round"/>
<line x1="311.94" y1="85.23" x2="308.08" y2="80.95" stroke="#f8f8f8" stroke-width="2.5" stroke-linecap="round"/>
<text x="312.7" y="105.9" font-size="8.7" fill="#444" font-weight="bold" text-anchor="middle" textLength="18.5" lengthAdjust="spacingAndGlyphs">Osc1</text>
<path d="M342.09,98.19 A16,16 0 1 1 363.51,98.19" fill="none" stroke="#8a8a8a" stroke-width="1"/>
<line x1="352.8" y1="67.8" x2="352.8" y2="75.2" stroke="#8a8a8a" stroke-width="1"/>
<circle cx="352.8" cy="86.3" r="12.2" fill="#d2d2d2"/>
<circle cx="352.8" cy="86.3" r="11.4" fill="#ececec"/>
<circle cx="352.8" cy="86.3" r="8.9" fill="url(#gd)" stroke="#252525" stroke-width="1.5"/>
<line x1="352.80" y1="84.86" x2="352.80" y2="79.10" stroke="#333" stroke-width="4.2" stroke-linecap="round"/>
<line x1="352.80" y1="84.86" x2="352.80" y2="79.10" stroke="#f8f8f8" stroke-width="2.5" stroke-linecap="round"/>
<text x="352.7" y="105.9" font-size="8.7" fill="#444" font-weight="bold" text-anchor="middle" textLength="14" lengthAdjust="spacingAndGlyphs">Pan</text>
<text x="337.6" y="98.3" font-size="4" fill="#555" font-weight="bold" text-anchor="middle">L</text>
<text x="367.5" y="98.3" font-size="4" fill="#555" font-weight="bold" text-anchor="middle">R</text>
<circle cx="304" cy="115.5" r="3.5" fill="#d0d0d0" stroke="#bcbcbc" stroke-width="2"/>
<rect x="303.25" y="112.0" width="1.5" height="7.0" fill="#e4e4e4"/>
<rect x="300.5" y="114.75" width="7.0" height="1.5" fill="#e4e4e4"/>
<circle cx="321.8" cy="115.5" r="3.5" fill="#d0d0d0" stroke="#bcbcbc" stroke-width="2"/>
<rect x="321.05" y="112.0" width="1.5" height="7.0" fill="#e4e4e4"/>
<rect x="318.3" y="114.75" width="7.0" height="1.5" fill="#e4e4e4"/>
<circle cx="342.4" cy="115.5" r="3.5" fill="#d0d0d0" stroke="#bcbcbc" stroke-width="2"/>
<rect x="341.65" y="112.0" width="1.5" height="7.0" fill="#e4e4e4"/>
<rect x="338.9" y="114.75" width="7.0" height="1.5" fill="#e4e4e4"/>
<circle cx="360.6" cy="115.5" r="3.5" fill="#d0d0d0" stroke="#bcbcbc" stroke-width="2"/>
<rect x="359.85" y="112.0" width="1.5" height="7.0" fill="#e4e4e4"/>
<rect x="357.1" y="114.75" width="7.0" height="1.5" fill="#e4e4e4"/>
<path d="M302.19,156.89 A16,16 0 1 1 323.61,156.89" fill="none" stroke="#8a8a8a" stroke-width="1"/>
<circle cx="312.9" cy="145" r="12.2" fill="#d2d2d2"/>
<circle cx="312.9" cy="145" r="11.4" fill="#ececec"/>
<circle cx="312.9" cy="145" r="8.9" fill="url(#gl)" stroke="#252525" stroke-width="1.5"/>
<line x1="314.32" y1="145.25" x2="319.99" y2="146.25" stroke="#333" stroke-width="4.2" stroke-linecap="round"/>
<line x1="314.32" y1="145.25" x2="319.99" y2="146.25" stroke="#f8f8f8" stroke-width="2.5" stroke-linecap="round"/>
<text x="312.7" y="164.6" font-size="8.7" fill="#444" font-weight="bold" text-anchor="middle" textLength="18.5" lengthAdjust="spacingAndGlyphs">Osc2</text>
<path d="M342.09,156.89 A16,16 0 1 1 363.51,156.89" fill="none" stroke="#8a8a8a" stroke-width="1"/>
<line x1="352.8" y1="126.5" x2="352.8" y2="133.9" stroke="#8a8a8a" stroke-width="1"/>
<circle cx="352.8" cy="145" r="12.2" fill="#d2d2d2"/>
<circle cx="352.8" cy="145" r="11.4" fill="#ececec"/>
<circle cx="352.8" cy="145" r="8.9" fill="url(#gd)" stroke="#252525" stroke-width="1.5"/>
<line x1="352.80" y1="143.56" x2="352.80" y2="137.80" stroke="#333" stroke-width="4.2" stroke-linecap="round"/>
<line x1="352.80" y1="143.56" x2="352.80" y2="137.80" stroke="#f8f8f8" stroke-width="2.5" stroke-linecap="round"/>
<text x="352.7" y="164.6" font-size="8.7" fill="#444" font-weight="bold" text-anchor="middle" textLength="14" lengthAdjust="spacingAndGlyphs">Pan</text>
<text x="337.6" y="157" font-size="4" fill="#555" font-weight="bold" text-anchor="middle">L</text>
<text x="367.5" y="157" font-size="4" fill="#555" font-weight="bold" text-anchor="middle">R</text>
<circle cx="304" cy="174.2" r="3.5" fill="#d0d0d0" stroke="#bcbcbc" stroke-width="2"/>
<rect x="303.25" y="170.7" width="1.5" height="7.0" fill="#e4e4e4"/>
<rect x="300.5" y="173.45" width="7.0" height="1.5" fill="#e4e4e4"/>
<circle cx="321.8" cy="174.2" r="3.5" fill="#d0d0d0" stroke="#bcbcbc" stroke-width="2"/>
<rect x="321.05" y="170.7" width="1.5" height="7.0" fill="#e4e4e4"/>
<rect x="318.3" y="173.45" width="7.0" height="1.5" fill="#e4e4e4"/>
<circle cx="342.4" cy="174.2" r="3.5" fill="#d0d0d0" stroke="#bcbcbc" stroke-width="2"/>
<rect x="341.65" y="170.7" width="1.5" height="7.0" fill="#e4e4e4"/>
<rect x="338.9" y="173.45" width="7.0" height="1.5" fill="#e4e4e4"/>
<circle cx="360.6" cy="174.2" r="3.5" fill="#d0d0d0" stroke="#bcbcbc" stroke-width="2"/>
<rect x="359.85" y="170.7" width="1.5" height="7.0" fill="#e4e4e4"/>
<rect x="357.1" y="173.45" width="7.0" height="1.5" fill="#e4e4e4"/>
<path d="M302.19,215.39 A16,16 0 1 1 323.61,215.39" fill="none" stroke="#8a8a8a" stroke-width="1"/>
<circle cx="312.9" cy="203.5" r="12.2" fill="#d2d2d2"/>
<circle cx="312.9" cy="203.5" r="11.4" fill="#ececec"/>
<circle cx="312.9" cy="203.5" r="8.9" fill="url(#gl)" stroke="#252525" stroke-width="1.5"/>
<line x1="312.07" y1="204.68" x2="308.77" y2="209.40" stroke="#333" stroke-width="4.2" stroke-linecap="round"/>
<line x1="312.07" y1="204.68" x2="308.77" y2="209.40" stroke="#f8f8f8" stroke-width="2.5" stroke-linecap="round"/>
<text x="312.7" y="223.1" font-size="8.7" fill="#444" font-weight="bold" text-anchor="middle" textLength="33.4" lengthAdjust="spacingAndGlyphs">Osc3/Sub</text>
<path d="M342.09,215.39 A16,16 0 1 1 363.51,215.39" fill="none" stroke="#8a8a8a" stroke-width="1"/>
<line x1="352.8" y1="185.0" x2="352.8" y2="192.4" stroke="#8a8a8a" stroke-width="1"/>
<circle cx="352.8" cy="203.5" r="12.2" fill="#d2d2d2"/>
<circle cx="352.8" cy="203.5" r="11.4" fill="#ececec"/>
<circle cx="352.8" cy="203.5" r="8.9" fill="url(#gd)" stroke="#252525" stroke-width="1.5"/>
<line x1="352.80" y1="202.06" x2="352.80" y2="196.30" stroke="#333" stroke-width="4.2" stroke-linecap="round"/>
<line x1="352.80" y1="202.06" x2="352.80" y2="196.30" stroke="#f8f8f8" stroke-width="2.5" stroke-linecap="round"/>
<text x="352.7" y="223.1" font-size="8.7" fill="#444" font-weight="bold" text-anchor="middle" textLength="14" lengthAdjust="spacingAndGlyphs">Pan</text>
<text x="337.6" y="215.5" font-size="4" fill="#555" font-weight="bold" text-anchor="middle">L</text>
<text x="367.5" y="215.5" font-size="4" fill="#555" font-weight="bold" text-anchor="middle">R</text>
<circle cx="304" cy="232.7" r="3.5" fill="#d0d0d0" stroke="#bcbcbc" stroke-width="2"/>
<rect x="303.25" y="229.2" width="1.5" height="7.0" fill="#e4e4e4"/>
<rect x="300.5" y="231.95" width="7.0" height="1.5" fill="#e4e4e4"/>
<circle cx="321.8" cy="232.7" r="3.5" fill="#d0d0d0" stroke="#bcbcbc" stroke-width="2"/>
<rect x="321.05" y="229.2" width="1.5" height="7.0" fill="#e4e4e4"/>
<rect x="318.3" y="231.95" width="7.0" height="1.5" fill="#e4e4e4"/>
<circle cx="342.4" cy="232.7" r="3.5" fill="#d0d0d0" stroke="#bcbcbc" stroke-width="2"/>
<rect x="341.65" y="229.2" width="1.5" height="7.0" fill="#e4e4e4"/>
<rect x="338.9" y="231.95" width="7.0" height="1.5" fill="#e4e4e4"/>
<circle cx="360.6" cy="232.7" r="3.5" fill="#d0d0d0" stroke="#bcbcbc" stroke-width="2"/>
<rect x="359.85" y="229.2" width="1.5" height="7.0" fill="#e4e4e4"/>
<rect x="357.1" y="231.95" width="7.0" height="1.5" fill="#e4e4e4"/>
<path d="M302.19,274.09 A16,16 0 1 1 323.61,274.09" fill="none" stroke="#8a8a8a" stroke-width="1"/>
<circle cx="312.9" cy="262.2" r="12.2" fill="#d2d2d2"/>
<circle cx="312.9" cy="262.2" r="11.4" fill="#ececec"/>
<circle cx="312.9" cy="262.2" r="8.9" fill="url(#gl)" stroke="#252525" stroke-width="1.5"/>
<line x1="311.97" y1="263.30" x2="308.27" y2="267.72" stroke="#333" stroke-width="4.2" stroke-linecap="round"/>
<line x1="311.97" y1="263.30" x2="308.27" y2="267.72" stroke="#f8f8f8" stroke-width="2.5" stroke-linecap="round"/>
<text x="312.7" y="281.8" font-size="8.7" fill="#444" font-weight="bold" text-anchor="middle" textLength="22.2" lengthAdjust="spacingAndGlyphs">Noise</text>
<path d="M342.09,274.09 A16,16 0 1 1 363.51,274.09" fill="none" stroke="#8a8a8a" stroke-width="1"/>
<line x1="352.8" y1="243.7" x2="352.8" y2="251.1" stroke="#8a8a8a" stroke-width="1"/>
<circle cx="352.8" cy="262.2" r="12.2" fill="#d2d2d2"/>
<circle cx="352.8" cy="262.2" r="11.4" fill="#ececec"/>
<circle cx="352.8" cy="262.2" r="8.9" fill="url(#gd)" stroke="#252525" stroke-width="1.5"/>
<line x1="352.80" y1="260.76" x2="352.80" y2="255.00" stroke="#333" stroke-width="4.2" stroke-linecap="round"/>
<line x1="352.80" y1="260.76" x2="352.80" y2="255.00" stroke="#f8f8f8" stroke-width="2.5" stroke-linecap="round"/>
<text x="352.7" y="281.8" font-size="8.7" fill="#444" font-weight="bold" text-anchor="middle" textLength="14" lengthAdjust="spacingAndGlyphs">Pan</text>
<text x="337.6" y="274.2" font-size="4" fill="#555" font-weight="bold" text-anchor="middle">L</text>
<text x="367.5" y="274.2" font-size="4" fill="#555" font-weight="bold" text-anchor="middle">R</text>
<circle cx="304" cy="291.4" r="3.5" fill="#d0d0d0" stroke="#bcbcbc" stroke-width="2"/>
<rect x="303.25" y="287.9" width="1.5" height="7.0" fill="#e4e4e4"/>
<rect x="300.5" y="290.65" width="7.0" height="1.5" fill="#e4e4e4"/>
<circle cx="321.8" cy="291.4" r="3.5" fill="#d0d0d0" stroke="#bcbcbc" stroke-width="2"/>
<rect x="321.05" y="287.9" width="1.5" height="7.0" fill="#e4e4e4"/>
<rect x="318.3" y="290.65" width="7.0" height="1.5" fill="#e4e4e4"/>
<circle cx="342.4" cy="291.4" r="3.5" fill="#d0d0d0" stroke="#bcbcbc" stroke-width="2"/>
<rect x="341.65" y="287.9" width="1.5" height="7.0" fill="#e4e4e4"/>
<rect x="338.9" y="290.65" width="7.0" height="1.5" fill="#e4e4e4"/>
<circle cx="360.6" cy="291.4" r="3.5" fill="#d0d0d0" stroke="#bcbcbc" stroke-width="2"/>
<rect x="359.85" y="287.9" width="1.5" height="7.0" fill="#e4e4e4"/>
<rect x="357.1" y="290.65" width="7.0" height="1.5" fill="#e4e4e4"/>
<rect x="383.1" y="66.1" width="188.3" height="110.8" fill="none" stroke="#f4f4f4" stroke-width="0.9" rx="2.8"/>
<rect x="384" y="67" width="186.5" height="109" fill="#333333" stroke="#111" stroke-width="1.2" rx="2"/>
<rect x="384.6" y="67.6" width="185.3" height="14.5" fill="#3b3b3b"/>
<text x="407.3" y="78.5" font-size="8.5" fill="#e4e8ea" font-weight="bold" text-anchor="middle" textLength="20" lengthAdjust="spacingAndGlyphs">Serial</text>
<text x="438.5" y="78.5" font-size="8.5" fill="#5a5a5a" font-weight="bold" text-anchor="middle" textLength="26.6" lengthAdjust="spacingAndGlyphs">Parallel</text>
<rect x="384.6" y="82" width="185.3" height="60" fill="#282828"/>
<path d="M384.6,111.5 L489,111.5 C505,111.5 510,118 522,142 L384.6,142 Z" fill="#2d3032"/>
<path d="M384.6,111.5 L489,111.5 C505,111.5 510,118 522,142" fill="none" stroke="#c8d2da" stroke-width="1.4"/>
<rect x="384.6" y="142" width="185.3" height="33.4" fill="#333333"/>
<rect x="476.5" y="142" width="1" height="33.5" fill="#222"/>
<text x="396" y="155" font-size="8" fill="#5a5a5a" font-weight="normal" text-anchor="middle" textLength="5" lengthAdjust="spacingAndGlyphs">--</text>
<rect x="405.4" y="147" width="11.8" height="9.5" fill="#4b5a66"/>
<text x="411.3" y="155" font-size="8.5" fill="#e8eef2" font-weight="bold" text-anchor="middle" textLength="8.5" lengthAdjust="spacingAndGlyphs">LP</text>
<text x="425.2" y="155" font-size="8.5" fill="#555" font-weight="normal" text-anchor="middle" textLength="9" lengthAdjust="spacingAndGlyphs">BP</text>
<text x="439.2" y="155" font-size="8.5" fill="#555" font-weight="normal" text-anchor="middle" textLength="10.4" lengthAdjust="spacingAndGlyphs">HP</text>
<rect x="453.3" y="146.5" width="17.7" height="11.5" fill="#2c2c2c" stroke="#888" stroke-width="0.9"/>
<text x="460.7" y="155.5" font-size="9" fill="#e0e0e0" font-weight="normal" text-anchor="middle">4</text>
<text x="467" y="155" font-size="7" fill="#aaa" font-weight="normal" text-anchor="middle">:</text>
<rect x="390.5" y="163" width="19.0" height="9.5" fill="#4b5a66"/>
<text x="400.0" y="171" font-size="7.5" fill="#e2e8ec" font-weight="normal" text-anchor="middle" textLength="16.0" lengthAdjust="spacingAndGlyphs">OSC1</text>
<rect x="410.8" y="163" width="19.19999999999999" height="9.5" fill="#4b5a66"/>
<text x="420.4" y="171" font-size="7.5" fill="#e2e8ec" font-weight="normal" text-anchor="middle" textLength="16.19999999999999" lengthAdjust="spacingAndGlyphs">OSC2</text>
<rect x="431.5" y="163" width="18.5" height="9.5" fill="#4b5a66"/>
<text x="440.75" y="171" font-size="7.5" fill="#e2e8ec" font-weight="normal" text-anchor="middle" textLength="15.5" lengthAdjust="spacingAndGlyphs">OSC3</text>
<rect x="452" y="163" width="18.5" height="9.5" fill="#4b5a66"/>
<text x="461.25" y="171" font-size="7.5" fill="#e2e8ec" font-weight="normal" text-anchor="middle" textLength="15.5" lengthAdjust="spacingAndGlyphs">NOIZ</text>
<rect x="482.8" y="147" width="12.7" height="11" fill="#5a3b40"/>
<text x="489.5" y="155" font-size="8" fill="#d89aa2" font-weight="bold" text-anchor="middle">--</text>
<text x="503" y="155" font-size="8.5" fill="#555" font-weight="normal" text-anchor="middle" textLength="8" lengthAdjust="spacingAndGlyphs">LP</text>
<text x="517.5" y="155" font-size="8.5" fill="#555" font-weight="normal" text-anchor="middle" textLength="8.5" lengthAdjust="spacingAndGlyphs">BP</text>
<text x="531.2" y="155" font-size="8.5" fill="#555" font-weight="normal" text-anchor="middle" textLength="9.5" lengthAdjust="spacingAndGlyphs">HP</text>
<rect x="476.8" y="176" width="1.2" height="82" fill="#666"/>
<rect x="453" y="257.5" width="48" height="1.2" fill="#777"/>
<path d="M393.35,222.05 A21,21 0 1 1 423.05,222.05" fill="none" stroke="#8a8a8a" stroke-width="1"/>
<path d="M395.73,192.34 A19.4,19.4 0 0 1 420.67,222.06" fill="none" stroke="#62b89a" stroke-width="2.2"/>
<path d="M396.56,194.27 A17.4,17.4 0 0 1 420.07,219.93" fill="none" stroke="#7fd0e0" stroke-width="1.6"/>
<path d="M397.90,195.76 A15.4,15.4 0 0 1 419.09,218.09" fill="none" stroke="#3d9fd8" stroke-width="2.4"/>
<circle cx="408.2" cy="207.2" r="13.4" fill="#d6d6d6"/>
<circle cx="408.2" cy="207.2" r="11.6" fill="url(#gl)" stroke="#1e1e1e" stroke-width="2"/>
<line x1="407.60" y1="206.68" x2="400.65" y2="200.64" stroke="#2e2e2e" stroke-width="5.2"/>
<line x1="407.60" y1="206.68" x2="400.65" y2="200.64" stroke="#f6f6f6" stroke-width="3.2"/>
<text x="408.7" y="232" font-size="10.2" fill="#3d3d3d" font-weight="normal" text-anchor="middle" textLength="25.5" lengthAdjust="spacingAndGlyphs">Cutoff</text>
<path d="M445.44,206.81 A12.8,12.8 0 1 1 462.56,206.81" fill="none" stroke="#8a8a8a" stroke-width="1"/>
<line x1="454" y1="182.0" x2="454" y2="188.0" stroke="#8a8a8a" stroke-width="1"/>
<circle cx="454" cy="197.3" r="10.4" fill="#d2d2d2"/>
<circle cx="454" cy="197.3" r="9.6" fill="#ececec"/>
<circle cx="454" cy="197.3" r="7.1" fill="url(#gd)" stroke="#252525" stroke-width="1.5"/>
<line x1="453.25" y1="198.20" x2="450.24" y2="201.78" stroke="#333" stroke-width="4.2" stroke-linecap="round"/>
<line x1="453.25" y1="198.20" x2="450.24" y2="201.78" stroke="#f8f8f8" stroke-width="2.5" stroke-linecap="round"/>
<text x="454" y="212.2" font-size="7.6" fill="#444" font-weight="bold" text-anchor="middle" textLength="16.2" lengthAdjust="spacingAndGlyphs">Reso</text>
<circle cx="446.5" cy="221.5" r="3.5" fill="#d0d0d0" stroke="#bcbcbc" stroke-width="2"/>
<rect x="445.75" y="218.0" width="1.5" height="7.0" fill="#e4e4e4"/>
<rect x="443.0" y="220.75" width="7.0" height="1.5" fill="#e4e4e4"/>
<circle cx="461" cy="221.5" r="3.5" fill="#d0d0d0" stroke="#bcbcbc" stroke-width="2"/>
<rect x="460.25" y="218.0" width="1.5" height="7.0" fill="#e4e4e4"/>
<rect x="457.5" y="220.75" width="7.0" height="1.5" fill="#e4e4e4"/>
<rect x="437.5" y="231.7" width="33.0" height="10.100000000000023" fill="#e6e6e6" stroke="#6a6a6a" stroke-width="1"/>
<text x="438.8" y="239.3" font-size="8.1" fill="#333" font-weight="normal" text-anchor="start" textLength="17.0" lengthAdjust="spacingAndGlyphs">Drive</text>
<text x="469.2" y="239.3" font-size="8.1" fill="#333" font-weight="normal" text-anchor="end">0</text>
<rect x="437.5" y="244.9" width="33.0" height="10.400000000000006" fill="#e6e6e6" stroke="#6a6a6a" stroke-width="1"/>
<text x="438.8" y="252.8" font-size="8.1" fill="#333" font-weight="normal" text-anchor="start" textLength="10.399999999999999" lengthAdjust="spacingAndGlyphs">Key</text>
<text x="469.2" y="252.8" font-size="8.1" fill="#333" font-weight="normal" text-anchor="end">0</text>
<rect x="484.5" y="231.7" width="32.5" height="10.100000000000023" fill="#e6e6e6" stroke="#6a6a6a" stroke-width="1"/>
<rect x="484.5" y="244.9" width="32.5" height="10.400000000000006" fill="#e6e6e6" stroke="#6a6a6a" stroke-width="1"/>
<circle cx="392.9" cy="244.4" r="6.3" fill="#1d2a2c" stroke="#111" stroke-width="1"/>
<rect x="392.4" y="240.5" width="1" height="7.5" fill="#5a8a8a"/>
<circle cx="408.4" cy="244.4" r="6.3" fill="#1a3247" stroke="#111" stroke-width="1"/>
<path d="M411,241.8 A3,3 0 1 0 411,247" fill="none" stroke="#5ab0e8" stroke-width="1.5"/>
<circle cx="424.5" cy="244.4" r="4" fill="#d0d0d0" stroke="#bcbcbc" stroke-width="2"/>
<rect x="423.75" y="240.4" width="1.5" height="8" fill="#e4e4e4"/>
<rect x="420.5" y="243.65" width="8" height="1.5" fill="#e4e4e4"/>
<path d="M491.24,205.46 A13.1,13.1 0 1 1 509.76,205.46" fill="none" stroke="#888" stroke-width="1"/>
<circle cx="500.5" cy="196.2" r="9.2" fill="#8c8c8c" stroke="#a6a6a6" stroke-width="1.2"/>
<rect x="496.4" y="210.3" width="1.5" height="1.1" fill="#6a6a6a"/>
<rect x="498.6" y="210.3" width="1.5" height="1.1" fill="#6a6a6a"/>
<rect x="500.8" y="210.3" width="1.5" height="1.1" fill="#6a6a6a"/>
<rect x="503.0" y="210.3" width="1.5" height="1.1" fill="#6a6a6a"/>
<circle cx="493.2" cy="221.5" r="4.6" fill="none" stroke="#c6c6c6" stroke-width="1.3"/>
<path d="M492.09999999999997,217.7 h2.2 v2.6999999999999997 h2.6999999999999997 v2.2 h-2.6999999999999997 v2.6999999999999997 h-2.2 v-2.6999999999999997 h-2.6999999999999997 v-2.2 h2.6999999999999997 z" fill="#e0e0e0" stroke="#c2c2c2" stroke-width="0.9"/>
<circle cx="508" cy="221.5" r="4.6" fill="none" stroke="#c6c6c6" stroke-width="1.3"/>
<path d="M506.9,217.7 h2.2 v2.6999999999999997 h2.6999999999999997 v2.2 h-2.6999999999999997 v2.6999999999999997 h-2.2 v-2.6999999999999997 h-2.6999999999999997 v-2.2 h2.6999999999999997 z" fill="#e0e0e0" stroke="#c2c2c2" stroke-width="0.9"/>
<path d="M530.68,221.72 A21.1,21.1 0 1 1 560.52,221.72" fill="none" stroke="#888" stroke-width="1"/>
<circle cx="545.6" cy="206.8" r="15" fill="#8c8c8c" stroke="#a6a6a6" stroke-width="1.2"/>
<rect x="541.5" y="229.5" width="1.5" height="1.1" fill="#6a6a6a"/>
<rect x="543.7" y="229.5" width="1.5" height="1.1" fill="#6a6a6a"/>
<rect x="545.9" y="229.5" width="1.5" height="1.1" fill="#6a6a6a"/>
<rect x="548.1" y="229.5" width="1.5" height="1.1" fill="#6a6a6a"/>
<circle cx="529.5" cy="243.5" r="5.5" fill="none" stroke="#c6c6c6" stroke-width="1.3"/>
<path d="M528.4,239.7 h2.2 v2.6999999999999997 h2.6999999999999997 v2.2 h-2.6999999999999997 v2.6999999999999997 h-2.2 v-2.6999999999999997 h-2.6999999999999997 v-2.2 h2.6999999999999997 z" fill="#e0e0e0" stroke="#c2c2c2" stroke-width="0.9"/>
<circle cx="545.6" cy="243.5" r="5.5" fill="none" stroke="#c6c6c6" stroke-width="1.3"/>
<path d="M544.5,239.7 h2.2 v2.6999999999999997 h2.6999999999999997 v2.2 h-2.6999999999999997 v2.6999999999999997 h-2.2 v-2.6999999999999997 h-2.6999999999999997 v-2.2 h2.6999999999999997 z" fill="#e0e0e0" stroke="#c2c2c2" stroke-width="0.9"/>
<circle cx="561.6" cy="243.5" r="5.5" fill="none" stroke="#c6c6c6" stroke-width="1.3"/>
<path d="M560.5,239.7 h2.2 v2.6999999999999997 h2.6999999999999997 v2.2 h-2.6999999999999997 v2.6999999999999997 h-2.2 v-2.6999999999999997 h-2.6999999999999997 v-2.2 h2.6999999999999997 z" fill="#e0e0e0" stroke="#c2c2c2" stroke-width="0.9"/>
<path d="M389.50,283.74 A12.7,12.7 0 1 1 406.50,283.74" fill="none" stroke="#8a8a8a" stroke-width="1"/>
<line x1="398" y1="259.1" x2="398" y2="265.4" stroke="#8a8a8a" stroke-width="1"/>
<circle cx="398" cy="274.3" r="10.0" fill="#d2d2d2"/>
<circle cx="398" cy="274.3" r="9.200000000000001" fill="#ececec"/>
<circle cx="398" cy="274.3" r="6.7" fill="url(#gd)" stroke="#252525" stroke-width="1.5"/>
<line x1="398.00" y1="273.19" x2="398.00" y2="268.75" stroke="#333" stroke-width="4.2" stroke-linecap="round"/>
<line x1="398.00" y1="273.19" x2="398.00" y2="268.75" stroke="#f8f8f8" stroke-width="2.5" stroke-linecap="round"/>
<text x="397.8" y="297" font-size="8.7" fill="#444" font-weight="bold" text-anchor="middle" textLength="28" lengthAdjust="spacingAndGlyphs">EnvDep</text>
<circle cx="419.4" cy="275.6" r="3.5999999999999996" fill="#d0d0d0" stroke="#bcbcbc" stroke-width="2"/>
<rect x="418.65" y="272.0" width="1.5" height="7.2" fill="#e4e4e4"/>
<rect x="415.8" y="274.85" width="7.2" height="1.5" fill="#e4e4e4"/>
<circle cx="419.4" cy="290" r="3.5999999999999996" fill="#d0d0d0" stroke="#bcbcbc" stroke-width="2"/>
<rect x="418.65" y="286.4" width="1.5" height="7.2" fill="#e4e4e4"/>
<rect x="415.8" y="289.25" width="7.2" height="1.5" fill="#e4e4e4"/>
<rect x="429.5" y="262" width="19" height="40.5" fill="#8c8c8c" stroke="#6a6a6a" stroke-width="1.2"/>
<rect x="430.6" y="263.1" width="16.8" height="8.8" fill="#acacac"/>
<text x="439" y="270.3" font-size="8" fill="#5a5a5a" font-weight="normal" text-anchor="middle" textLength="14" lengthAdjust="spacingAndGlyphs">Env1</text>
<rect x="430.3" y="272.8" width="17.4" height="9.2" fill="#d4eafa" stroke="#5a88b0" stroke-width="0.8"/>
<text x="439" y="280.3" font-size="8" fill="#2a4a66" font-weight="normal" text-anchor="middle" textLength="14" lengthAdjust="spacingAndGlyphs">Env2</text>
<rect x="430.6" y="283.1" width="16.8" height="8.8" fill="#acacac"/>
<text x="439" y="290.3" font-size="8" fill="#5a5a5a" font-weight="normal" text-anchor="middle" textLength="14" lengthAdjust="spacingAndGlyphs">Env3</text>
<rect x="430.6" y="293.1" width="16.8" height="8.8" fill="#acacac"/>
<text x="439" y="300.3" font-size="8" fill="#5a5a5a" font-weight="normal" text-anchor="middle" textLength="14" lengthAdjust="spacingAndGlyphs">Env4</text>
<circle cx="455.7" cy="267.2" r="3.4000000000000004" fill="#d0d0d0" stroke="#bcbcbc" stroke-width="2"/>
<rect x="454.95" y="263.8" width="1.5" height="6.8" fill="#e4e4e4"/>
<rect x="452.3" y="266.45" width="6.8" height="1.5" fill="#e4e4e4"/>
<path d="M467.10,291.10 A14.8,14.8 0 1 1 486.90,291.10" fill="none" stroke="#8a8a8a" stroke-width="1"/>
<line x1="477" y1="262.8" x2="477" y2="269.7" stroke="#8a8a8a" stroke-width="1"/>
<circle cx="477" cy="280.1" r="11.5" fill="#d2d2d2"/>
<circle cx="477" cy="280.1" r="10.700000000000001" fill="#ececec"/>
<circle cx="477" cy="280.1" r="8.200000000000001" fill="url(#gl)" stroke="#252525" stroke-width="1.5"/>
<line x1="477.00" y1="278.77" x2="477.00" y2="273.43" stroke="#333" stroke-width="4.2" stroke-linecap="round"/>
<line x1="477.00" y1="278.77" x2="477.00" y2="273.43" stroke="#f8f8f8" stroke-width="2.5" stroke-linecap="round"/>
<text x="477.3" y="297.8" font-size="7.6" fill="#444" font-weight="bold" text-anchor="middle" textLength="21.3" lengthAdjust="spacingAndGlyphs">CF 1+2</text>
<text x="463" y="291.5" font-size="6" fill="#444" font-weight="bold" text-anchor="middle">-</text>
<text x="490.8" y="292" font-size="6" fill="#444" font-weight="bold" text-anchor="middle">+</text>
<circle cx="498.8" cy="266.8" r="3.4" fill="none" stroke="#c6c6c6" stroke-width="1.6"/>
<rect x="505.9" y="262.4" width="19.1" height="39.4" fill="#5a4a50"/>
<rect x="507" y="263.4" width="17" height="8.4" fill="#c2b8bc"/>
<rect x="507" y="273.0" width="17" height="8.4" fill="#c2b8bc"/>
<rect x="507" y="282.59999999999997" width="17" height="8.4" fill="#c2b8bc"/>
<rect x="507" y="292.2" width="17" height="8.4" fill="#c2b8bc"/>
<circle cx="535" cy="275.6" r="3.8" fill="none" stroke="#c6c6c6" stroke-width="1.3"/>
<path d="M533.9,271.8 h2.2 v2.6999999999999997 h2.6999999999999997 v2.2 h-2.6999999999999997 v2.6999999999999997 h-2.2 v-2.6999999999999997 h-2.6999999999999997 v-2.2 h2.6999999999999997 z" fill="#e0e0e0" stroke="#c2c2c2" stroke-width="0.9"/>
<circle cx="535" cy="290" r="3.8" fill="none" stroke="#c6c6c6" stroke-width="1.3"/>
<path d="M533.9,286.2 h2.2 v2.6999999999999997 h2.6999999999999997 v2.2 h-2.6999999999999997 v2.6999999999999997 h-2.2 v-2.6999999999999997 h-2.6999999999999997 v-2.2 h2.6999999999999997 z" fill="#e0e0e0" stroke="#c2c2c2" stroke-width="0.9"/>
<path d="M547.31,285.69 A13,13 0 1 1 565.69,285.69" fill="none" stroke="#888" stroke-width="1"/>
<line x1="556.5" y1="262" x2="556.5" y2="267" stroke="#888" stroke-width="1"/>
<circle cx="556.5" cy="276.5" r="8.9" fill="#8a8a8a" stroke="#a0a0a0" stroke-width="1"/>
<rect x="552.4" y="294" width="1.5" height="1.1" fill="#6a6a6a"/>
<rect x="554.6" y="294" width="1.5" height="1.1" fill="#6a6a6a"/>
<rect x="556.8" y="294" width="1.5" height="1.1" fill="#6a6a6a"/>
<rect x="559.0" y="294" width="1.5" height="1.1" fill="#6a6a6a"/>
<rect x="587.6" y="62.4" width="202.3" height="44.7" fill="none" stroke="#f4f4f4" stroke-width="0.9" rx="3.8"/>
<rect x="588.5" y="63.3" width="200.5" height="42.900000000000006" fill="#282828" stroke="#111" stroke-width="1.4" rx="3"/>
<path d="M592.7,103 L596.3,67.8 C603,80 615,97 640,102.6 L744.2,102.8 L744.2,103 Z" fill="#363d43"/>
<path d="M592.7,103 L596.3,67.8 C603,80 615,97 640,102.6 L744.2,102.8 L744.2,103" fill="none" stroke="#b8c6d0" stroke-width="1.3"/>
<text x="781.7" y="75.89999999999999" font-size="8.3" fill="#8d9ba5" font-weight="normal" text-anchor="end" textLength="38" lengthAdjust="spacingAndGlyphs">ENV1(AMP)</text>
<rect x="587.6" y="154.1" width="202.3" height="43.3" fill="none" stroke="#f4f4f4" stroke-width="0.9" rx="3.8"/>
<rect x="588.5" y="155" width="200.5" height="41.5" fill="#282828" stroke="#111" stroke-width="1.4" rx="3"/>
<path d="M592.8,193.4 C597,178 602,158.5 609.5,158.5 C616,159 630,190 648,193.3 L753,193.3 Z" fill="#363d43"/>
<path d="M592.8,193.4 C597,178 602,158.5 609.5,158.5 C616,159 630,190 648,193.3 L753,193.3" fill="none" stroke="#b8c6d0" stroke-width="1.3"/>
<text x="781.7" y="167.6" font-size="8.3" fill="#8d9ba5" font-weight="normal" text-anchor="end" textLength="18.5" lengthAdjust="spacingAndGlyphs">ENV2</text>
<path d="M589.70,133.01 A12.4,12.4 0 1 1 606.30,133.01" fill="none" stroke="#8a8a8a" stroke-width="1"/>
<circle cx="598" cy="123.8" r="10.2" fill="#d2d2d2"/>
<circle cx="598" cy="123.8" r="9.4" fill="#ececec"/>
<circle cx="598" cy="123.8" r="6.8999999999999995" fill="url(#gl)" stroke="#252525" stroke-width="1.5"/>
<line x1="597.01" y1="124.37" x2="593.06" y2="126.65" stroke="#333" stroke-width="4.2" stroke-linecap="round"/>
<line x1="597.01" y1="124.37" x2="593.06" y2="126.65" stroke="#f8f8f8" stroke-width="2.5" stroke-linecap="round"/>
<text x="598" y="143.7" font-size="8.7" fill="#333" font-weight="bold" text-anchor="middle">A</text>
<path d="M632.70,133.01 A12.4,12.4 0 1 1 649.30,133.01" fill="none" stroke="#8a8a8a" stroke-width="1"/>
<circle cx="641" cy="123.8" r="10.2" fill="#d2d2d2"/>
<circle cx="641" cy="123.8" r="9.4" fill="#ececec"/>
<circle cx="641" cy="123.8" r="6.8999999999999995" fill="url(#gl)" stroke="#252525" stroke-width="1.5"/>
<line x1="641.93" y1="123.15" x2="645.67" y2="120.53" stroke="#333" stroke-width="4.2" stroke-linecap="round"/>
<line x1="641.93" y1="123.15" x2="645.67" y2="120.53" stroke="#f8f8f8" stroke-width="2.5" stroke-linecap="round"/>
<text x="641" y="143.7" font-size="8.7" fill="#333" font-weight="bold" text-anchor="middle">D</text>
<path d="M676.20,133.01 A12.4,12.4 0 1 1 692.80,133.01" fill="none" stroke="#8a8a8a" stroke-width="1"/>
<circle cx="684.5" cy="123.8" r="10.2" fill="#d2d2d2"/>
<circle cx="684.5" cy="123.8" r="9.4" fill="#ececec"/>
<circle cx="684.5" cy="123.8" r="6.8999999999999995" fill="url(#gd)" stroke="#252525" stroke-width="1.5"/>
<line x1="683.57" y1="124.45" x2="679.83" y2="127.07" stroke="#333" stroke-width="4.2" stroke-linecap="round"/>
<line x1="683.57" y1="124.45" x2="679.83" y2="127.07" stroke="#f8f8f8" stroke-width="2.5" stroke-linecap="round"/>
<text x="684.5" y="143.7" font-size="8.7" fill="#333" font-weight="bold" text-anchor="middle">S</text>
<path d="M719.40,133.01 A12.4,12.4 0 1 1 736.00,133.01" fill="none" stroke="#8a8a8a" stroke-width="1"/>
<circle cx="727.7" cy="123.8" r="10.2" fill="#d2d2d2"/>
<circle cx="727.7" cy="123.8" r="9.4" fill="#ececec"/>
<circle cx="727.7" cy="123.8" r="6.8999999999999995" fill="url(#gl)" stroke="#252525" stroke-width="1.5"/>
<line x1="727.13" y1="122.81" x2="724.85" y2="118.86" stroke="#333" stroke-width="4.2" stroke-linecap="round"/>
<line x1="727.13" y1="122.81" x2="724.85" y2="118.86" stroke="#f8f8f8" stroke-width="2.5" stroke-linecap="round"/>
<text x="727.7" y="143.7" font-size="8.7" fill="#333" font-weight="bold" text-anchor="middle">R</text>
<circle cx="620" cy="122.8" r="3.4000000000000004" fill="#d0d0d0" stroke="#bcbcbc" stroke-width="2"/>
<rect x="619.25" y="119.4" width="1.5" height="6.8" fill="#e4e4e4"/>
<rect x="616.6" y="122.05" width="6.8" height="1.5" fill="#e4e4e4"/>
<circle cx="620" cy="137.3" r="3.4000000000000004" fill="#d0d0d0" stroke="#bcbcbc" stroke-width="2"/>
<rect x="619.25" y="133.9" width="1.5" height="6.8" fill="#e4e4e4"/>
<rect x="616.6" y="136.55" width="6.8" height="1.5" fill="#e4e4e4"/>
<circle cx="663" cy="122.8" r="3.4000000000000004" fill="#d0d0d0" stroke="#bcbcbc" stroke-width="2"/>
<rect x="662.25" y="119.4" width="1.5" height="6.8" fill="#e4e4e4"/>
<rect x="659.6" y="122.05" width="6.8" height="1.5" fill="#e4e4e4"/>
<circle cx="663" cy="137.3" r="3.4000000000000004" fill="#d0d0d0" stroke="#bcbcbc" stroke-width="2"/>
<rect x="662.25" y="133.9" width="1.5" height="6.8" fill="#e4e4e4"/>
<rect x="659.6" y="136.55" width="6.8" height="1.5" fill="#e4e4e4"/>
<circle cx="706.3" cy="122.8" r="3.4000000000000004" fill="#d0d0d0" stroke="#bcbcbc" stroke-width="2"/>
<rect x="705.55" y="119.4" width="1.5" height="6.8" fill="#e4e4e4"/>
<rect x="702.9" y="122.05" width="6.8" height="1.5" fill="#e4e4e4"/>
<circle cx="706.3" cy="137.3" r="3.4000000000000004" fill="#d0d0d0" stroke="#bcbcbc" stroke-width="2"/>
<rect x="705.55" y="133.9" width="1.5" height="6.8" fill="#e4e4e4"/>
<rect x="702.9" y="136.55" width="6.8" height="1.5" fill="#e4e4e4"/>
<circle cx="749.3" cy="122.8" r="3.4000000000000004" fill="#d0d0d0" stroke="#bcbcbc" stroke-width="2"/>
<rect x="748.55" y="119.4" width="1.5" height="6.8" fill="#e4e4e4"/>
<rect x="745.9" y="122.05" width="6.8" height="1.5" fill="#e4e4e4"/>
<circle cx="749.3" cy="137.3" r="3.4000000000000004" fill="#d0d0d0" stroke="#bcbcbc" stroke-width="2"/>
<rect x="748.55" y="133.9" width="1.5" height="6.8" fill="#e4e4e4"/>
<rect x="745.9" y="136.55" width="6.8" height="1.5" fill="#e4e4e4"/>
<rect x="761.5" y="111.3" width="29" height="9.8" fill="#e6e6e6" stroke="#8a8a8a" stroke-width="0.9"/>
<text x="762.8" y="119.5" font-size="8.2" fill="#333" font-weight="bold" text-anchor="start" textLength="10.5" lengthAdjust="spacingAndGlyphs">Vel</text>
<text x="789.3" y="119.5" font-size="8.2" fill="#333" font-weight="bold" text-anchor="end" textLength="4.2" lengthAdjust="spacingAndGlyphs">0</text>
<rect x="761.5" y="123.6" width="29" height="9.8" fill="#e6e6e6" stroke="#8a8a8a" stroke-width="0.9"/>
<rect x="762" y="124.1" width="20" height="8.8" fill="url(#gb)"/>
<text x="762.8" y="131.79999999999998" font-size="8.2" fill="#24384a" font-weight="bold" text-anchor="start" textLength="7.6" lengthAdjust="spacingAndGlyphs">AS</text>
<text x="789.3" y="131.79999999999998" font-size="8.2" fill="#333" font-weight="bold" text-anchor="end" textLength="8" lengthAdjust="spacingAndGlyphs">50</text>
<rect x="761.5" y="135.9" width="29" height="9.8" fill="#e6e6e6" stroke="#8a8a8a" stroke-width="0.9"/>
<rect x="762" y="136.4" width="20" height="8.8" fill="url(#gb)"/>
<text x="762.8" y="144.1" font-size="8.2" fill="#24384a" font-weight="bold" text-anchor="start" textLength="12.4" lengthAdjust="spacingAndGlyphs">DRS</text>
<text x="789.3" y="144.1" font-size="8.2" fill="#333" font-weight="bold" text-anchor="end" textLength="8" lengthAdjust="spacingAndGlyphs">50</text>
<path d="M589.70,223.21 A12.4,12.4 0 1 1 606.30,223.21" fill="none" stroke="#8a8a8a" stroke-width="1"/>
<circle cx="598" cy="214" r="10.2" fill="#d2d2d2"/>
<circle cx="598" cy="214" r="9.4" fill="#ececec"/>
<circle cx="598" cy="214" r="6.8999999999999995" fill="url(#gl)" stroke="#252525" stroke-width="1.5"/>
<line x1="597.01" y1="213.43" x2="593.06" y2="211.15" stroke="#333" stroke-width="4.2" stroke-linecap="round"/>
<line x1="597.01" y1="213.43" x2="593.06" y2="211.15" stroke="#f8f8f8" stroke-width="2.5" stroke-linecap="round"/>
<text x="598" y="233.9" font-size="8.7" fill="#333" font-weight="bold" text-anchor="middle">A</text>
<path d="M632.70,223.21 A12.4,12.4 0 1 1 649.30,223.21" fill="none" stroke="#8a8a8a" stroke-width="1"/>
<circle cx="641" cy="214" r="10.2" fill="#d2d2d2"/>
<circle cx="641" cy="214" r="9.4" fill="#ececec"/>
<circle cx="641" cy="214" r="6.8999999999999995" fill="url(#gl)" stroke="#252525" stroke-width="1.5"/>
<line x1="641.00" y1="212.86" x2="641.00" y2="208.30" stroke="#333" stroke-width="4.2" stroke-linecap="round"/>
<line x1="641.00" y1="212.86" x2="641.00" y2="208.30" stroke="#f8f8f8" stroke-width="2.5" stroke-linecap="round"/>
<text x="641" y="233.9" font-size="8.7" fill="#333" font-weight="bold" text-anchor="middle">D</text>
<path d="M676.20,223.21 A12.4,12.4 0 1 1 692.80,223.21" fill="none" stroke="#8a8a8a" stroke-width="1"/>
<circle cx="684.5" cy="214" r="10.2" fill="#d2d2d2"/>
<circle cx="684.5" cy="214" r="9.4" fill="#ececec"/>
<circle cx="684.5" cy="214" r="6.8999999999999995" fill="url(#gd)" stroke="#252525" stroke-width="1.5"/>
<line x1="683.57" y1="214.65" x2="679.83" y2="217.27" stroke="#333" stroke-width="4.2" stroke-linecap="round"/>
<line x1="683.57" y1="214.65" x2="679.83" y2="217.27" stroke="#f8f8f8" stroke-width="2.5" stroke-linecap="round"/>
<text x="684.5" y="233.9" font-size="8.7" fill="#333" font-weight="bold" text-anchor="middle">S</text>
<path d="M719.40,223.21 A12.4,12.4 0 1 1 736.00,223.21" fill="none" stroke="#8a8a8a" stroke-width="1"/>
<circle cx="727.7" cy="214" r="10.2" fill="#d2d2d2"/>
<circle cx="727.7" cy="214" r="9.4" fill="#ececec"/>
<circle cx="727.7" cy="214" r="6.8999999999999995" fill="url(#gl)" stroke="#252525" stroke-width="1.5"/>
<line x1="727.70" y1="212.86" x2="727.70" y2="208.30" stroke="#333" stroke-width="4.2" stroke-linecap="round"/>
<line x1="727.70" y1="212.86" x2="727.70" y2="208.30" stroke="#f8f8f8" stroke-width="2.5" stroke-linecap="round"/>
<text x="727.7" y="233.9" font-size="8.7" fill="#333" font-weight="bold" text-anchor="middle">R</text>
<circle cx="620" cy="213" r="3.4000000000000004" fill="#d0d0d0" stroke="#bcbcbc" stroke-width="2"/>
<rect x="619.25" y="209.6" width="1.5" height="6.8" fill="#e4e4e4"/>
<rect x="616.6" y="212.25" width="6.8" height="1.5" fill="#e4e4e4"/>
<circle cx="620" cy="227.5" r="3.4000000000000004" fill="#d0d0d0" stroke="#bcbcbc" stroke-width="2"/>
<rect x="619.25" y="224.1" width="1.5" height="6.8" fill="#e4e4e4"/>
<rect x="616.6" y="226.75" width="6.8" height="1.5" fill="#e4e4e4"/>
<circle cx="663" cy="213" r="3.4000000000000004" fill="#d0d0d0" stroke="#bcbcbc" stroke-width="2"/>
<rect x="662.25" y="209.6" width="1.5" height="6.8" fill="#e4e4e4"/>
<rect x="659.6" y="212.25" width="6.8" height="1.5" fill="#e4e4e4"/>
<circle cx="663" cy="227.5" r="3.4000000000000004" fill="#d0d0d0" stroke="#bcbcbc" stroke-width="2"/>
<rect x="662.25" y="224.1" width="1.5" height="6.8" fill="#e4e4e4"/>
<rect x="659.6" y="226.75" width="6.8" height="1.5" fill="#e4e4e4"/>
<circle cx="706.3" cy="213" r="3.4000000000000004" fill="#d0d0d0" stroke="#bcbcbc" stroke-width="2"/>
<rect x="705.55" y="209.6" width="1.5" height="6.8" fill="#e4e4e4"/>
<rect x="702.9" y="212.25" width="6.8" height="1.5" fill="#e4e4e4"/>
<circle cx="706.3" cy="227.5" r="3.4000000000000004" fill="#d0d0d0" stroke="#bcbcbc" stroke-width="2"/>
<rect x="705.55" y="224.1" width="1.5" height="6.8" fill="#e4e4e4"/>
<rect x="702.9" y="226.75" width="6.8" height="1.5" fill="#e4e4e4"/>
<circle cx="749.3" cy="213" r="3.4000000000000004" fill="#d0d0d0" stroke="#bcbcbc" stroke-width="2"/>
<rect x="748.55" y="209.6" width="1.5" height="6.8" fill="#e4e4e4"/>
<rect x="745.9" y="212.25" width="6.8" height="1.5" fill="#e4e4e4"/>
<circle cx="749.3" cy="227.5" r="3.4000000000000004" fill="#d0d0d0" stroke="#bcbcbc" stroke-width="2"/>
<rect x="748.55" y="224.1" width="1.5" height="6.8" fill="#e4e4e4"/>
<rect x="745.9" y="226.75" width="6.8" height="1.5" fill="#e4e4e4"/>
<rect x="761.5" y="201.5" width="29" height="9.8" fill="#e6e6e6" stroke="#8a8a8a" stroke-width="0.9"/>
<text x="762.8" y="209.7" font-size="8.2" fill="#333" font-weight="bold" text-anchor="start" textLength="10.5" lengthAdjust="spacingAndGlyphs">Vel</text>
<text x="789.3" y="209.7" font-size="8.2" fill="#333" font-weight="bold" text-anchor="end" textLength="4.2" lengthAdjust="spacingAndGlyphs">0</text>
<rect x="761.5" y="213.8" width="29" height="9.8" fill="#e6e6e6" stroke="#8a8a8a" stroke-width="0.9"/>
<rect x="762" y="214.3" width="20" height="8.8" fill="url(#gb)"/>
<text x="762.8" y="222.0" font-size="8.2" fill="#24384a" font-weight="bold" text-anchor="start" textLength="7.6" lengthAdjust="spacingAndGlyphs">AS</text>
<text x="789.3" y="222.0" font-size="8.2" fill="#333" font-weight="bold" text-anchor="end" textLength="8" lengthAdjust="spacingAndGlyphs">50</text>
<rect x="761.5" y="226.1" width="29" height="9.8" fill="#e6e6e6" stroke="#8a8a8a" stroke-width="0.9"/>
<rect x="762" y="226.6" width="20" height="8.8" fill="url(#gb)"/>
<text x="762.8" y="234.29999999999998" font-size="8.2" fill="#24384a" font-weight="bold" text-anchor="start" textLength="12.4" lengthAdjust="spacingAndGlyphs">DRS</text>
<text x="789.3" y="234.29999999999998" font-size="8.2" fill="#333" font-weight="bold" text-anchor="end" textLength="8" lengthAdjust="spacingAndGlyphs">50</text>
<rect x="585" y="251.7" width="11" height="1.6" fill="#a8a8a8"/>
<rect x="585" y="254.89999999999998" width="11" height="1.6" fill="#a8a8a8"/>
<rect x="585" y="258.09999999999997" width="11" height="1.6" fill="#a8a8a8"/>
<text x="646.4" y="259" font-size="8.9" fill="#cde2f0" font-weight="bold" text-anchor="middle" textLength="31.3" lengthAdjust="spacingAndGlyphs">MASTER</text>
<text x="688.9" y="259" font-size="8.9" fill="#1e1e1e" font-weight="bold" text-anchor="middle" textLength="23.3" lengthAdjust="spacingAndGlyphs">MATH</text>
<text x="731.4" y="259" font-size="8.9" fill="#1e1e1e" font-weight="bold" text-anchor="middle" textLength="29.3" lengthAdjust="spacingAndGlyphs">MACRO</text>
<rect x="587" y="270" width="53" height="31.5" fill="#222527" stroke="#151515" stroke-width="0.8"/>
<text x="601.7" y="280.6" font-size="8" fill="#6e6e6e" font-weight="normal" text-anchor="middle" textLength="16" lengthAdjust="spacingAndGlyphs">Tune</text>
<text x="625.3" y="280.6" font-size="8" fill="#6e6e6e" font-weight="normal" text-anchor="middle" textLength="14" lengthAdjust="spacingAndGlyphs">Fine</text>
<text x="602" y="295.5" font-size="9.5" fill="#e8e8e8" font-weight="normal" text-anchor="middle">0</text>
<text x="625" y="295.5" font-size="9.5" fill="#e8e8e8" font-weight="normal" text-anchor="middle">0</text>
<rect x="646" y="270" width="53.2" height="31.5" fill="#222527" stroke="#151515" stroke-width="0.8"/>
<text x="661" y="280.6" font-size="8" fill="#6e6e6e" font-weight="normal" text-anchor="middle" textLength="18" lengthAdjust="spacingAndGlyphs">Mode</text>
<text x="684.6" y="280.6" font-size="8" fill="#6e6e6e" font-weight="normal" text-anchor="middle" textLength="18.3" lengthAdjust="spacingAndGlyphs">Voice</text>
<text x="655.3" y="294.4" font-size="7.8" fill="#d8e2ea" font-weight="normal" text-anchor="start" textLength="13.5" lengthAdjust="spacingAndGlyphs">Mono</text>
<path d="M716.26,296.56 A16.5,16.5 0 1 1 738.34,296.56" fill="none" stroke="#8a8a8a" stroke-width="1"/>
<line x1="727.3" y1="265.3" x2="727.3" y2="273.0" stroke="#8a8a8a" stroke-width="1"/>
<circle cx="727.3" cy="284.3" r="12.4" fill="#d2d2d2"/>
<circle cx="727.3" cy="284.3" r="11.600000000000001" fill="#ececec"/>
<circle cx="727.3" cy="284.3" r="9.100000000000001" fill="url(#gd)" stroke="#252525" stroke-width="1.5"/>
<line x1="728.75" y1="284.04" x2="734.54" y2="283.02" stroke="#333" stroke-width="4.2" stroke-linecap="round"/>
<line x1="728.75" y1="284.04" x2="734.54" y2="283.02" stroke="#f8f8f8" stroke-width="2.5" stroke-linecap="round"/>
<text x="715" y="297.5" font-size="6" fill="#555" font-weight="normal" text-anchor="middle">-</text>
<text x="740" y="297.5" font-size="6" fill="#555" font-weight="normal" text-anchor="middle">+</text>
<text x="727.5" y="303.2" font-size="7.7" fill="#444" font-weight="bold" text-anchor="middle" textLength="25.9" lengthAdjust="spacingAndGlyphs">Volume</text>
<rect x="757" y="270" width="29.5" height="12.5" fill="#d9d9d9" stroke="#262626" stroke-width="1.8" rx="1.5"/>
<text x="771.6" y="279.8" font-size="9" fill="#8a8a8a" font-weight="normal" text-anchor="middle" textLength="20" lengthAdjust="spacingAndGlyphs">Limit</text>
<rect x="757" y="289.5" width="29.5" height="12.5" fill="#d9d9d9" stroke="#262626" stroke-width="1.8" rx="1.5"/>
<text x="771.6" y="299.3" font-size="9" fill="#8a8a8a" font-weight="normal" text-anchor="middle" textLength="23.3" lengthAdjust="spacingAndGlyphs">Boost</text>
<rect x="5.5" y="311.6" width="40.0" height="12.6" fill="#1c2226" stroke="#253d4b" stroke-width="1"/>
<text x="25.5" y="320.8" font-size="8" fill="#3f80ab" font-weight="normal" text-anchor="middle" textLength="34.5" lengthAdjust="spacingAndGlyphs">PitchBend</text>
<rect x="48" y="311.6" width="40.7" height="12.6" fill="#1c2226" stroke="#253d4b" stroke-width="1"/>
<text x="68.35" y="320.8" font-size="8" fill="#3f80ab" font-weight="normal" text-anchor="middle" textLength="36" lengthAdjust="spacingAndGlyphs">C-Pressure</text>
<rect x="91.3" y="311.6" width="40.7" height="12.6" fill="#1c2226" stroke="#253d4b" stroke-width="1"/>
<text x="111.65" y="320.8" font-size="8" fill="#3f80ab" font-weight="normal" text-anchor="middle" textLength="36" lengthAdjust="spacingAndGlyphs">ModWheel</text>
<rect x="135.2" y="311.6" width="40.60000000000002" height="12.6" fill="#1c2226" stroke="#253d4b" stroke-width="1"/>
<text x="155.5" y="320.8" font-size="8" fill="#4a8cb8" font-weight="normal" text-anchor="middle" textLength="27.5" lengthAdjust="spacingAndGlyphs">Velocity</text>
<rect x="134.8" y="325.9" width="32.099999999999994" height="1.3" fill="#3f8ec0"/>
<rect x="178" y="311.6" width="40.69999999999999" height="12.6" fill="#1c2226" stroke="#253d4b" stroke-width="1"/>
<text x="198.35" y="320.8" font-size="8" fill="#4a8cb8" font-weight="normal" text-anchor="middle" textLength="25" lengthAdjust="spacingAndGlyphs">KeyTrk</text>
<rect x="194" y="325.9" width="5" height="1.3" fill="#5a7a90"/>
<rect x="221.3" y="311.6" width="41.19999999999999" height="12.6" fill="#1c2226" stroke="#253d4b" stroke-width="1"/>
<text x="241.9" y="320.8" font-size="8" fill="#4a8cb8" font-weight="normal" text-anchor="middle" textLength="36" lengthAdjust="spacingAndGlyphs">Alternate</text>
<rect x="222" y="325.9" width="19" height="1.3" fill="#3f8ec0"/>
<rect x="264.5" y="311.6" width="40.0" height="12.6" fill="#1c2226" stroke="#253d4b" stroke-width="1"/>
<text x="284.5" y="320.8" font-size="8" fill="#3f80ab" font-weight="normal" text-anchor="middle" textLength="30.5" lengthAdjust="spacingAndGlyphs">Random</text>
<rect x="313.8" y="311.6" width="26.19999999999999" height="12.6" fill="#1c2226" stroke="#2c4434" stroke-width="1"/>
<text x="326.9" y="320.8" font-size="8.5" fill="#5ea872" font-weight="normal" text-anchor="middle" textLength="22.5" lengthAdjust="spacingAndGlyphs">LFO1</text>
<rect x="313.8" y="325.9" width="36.89999999999998" height="1.3" fill="#9ad0a8"/>
<rect x="343.7" y="315.9" width="8.6" height="5.4" fill="#1a2a1e" stroke="#6cb482" stroke-width="1.6"/>
<path d="M346.4,315.1 l-0.8,-2 M349.59999999999997,315.1 l0.8,-2" fill="none" stroke="#6cb482" stroke-width="0.8" opacity="0.3"/>
<rect x="356.3" y="311.6" width="27.5" height="12.6" fill="#1c2226" stroke="#2c4434" stroke-width="1"/>
<text x="370.05" y="320.8" font-size="8.5" fill="#5ea872" font-weight="normal" text-anchor="middle" textLength="23" lengthAdjust="spacingAndGlyphs">LFO2</text>
<rect x="356" y="325.9" width="4" height="1.3" fill="#9ad0a8"/>
<rect x="386.3" y="315.9" width="8.6" height="5.4" fill="#1a2a1e" stroke="#6cb482" stroke-width="1.6"/>
<path d="M389,315.1 l-0.8,-2 M392.2,315.1 l0.8,-2" fill="none" stroke="#6cb482" stroke-width="0.8" opacity="0.3"/>
<rect x="399.3" y="311.6" width="25.5" height="12.6" fill="#1c2226" stroke="#24302b" stroke-width="1"/>
<text x="412.05" y="320.8" font-size="8.5" fill="#30503f" font-weight="normal" text-anchor="middle" textLength="16" lengthAdjust="spacingAndGlyphs">S&amp;H</text>
<rect x="428.8" y="315.9" width="8.6" height="5.4" fill="#1a2a1e" stroke="#52a088" stroke-width="1.6"/>
<path d="M431.5,315.1 l-0.8,-2 M434.7,315.1 l0.8,-2" fill="none" stroke="#52a088" stroke-width="0.8" opacity="0.3"/>
<rect x="445.3" y="311.6" width="50.19999999999999" height="12.6" fill="#1e1e1a" stroke="#6a6440" stroke-width="1"/>
<text x="470.4" y="320.8" font-size="8.7" fill="#d8d090" font-weight="bold" text-anchor="middle" textLength="44" lengthAdjust="spacingAndGlyphs">SEQ/MEnv1</text>
<rect x="446" y="325.9" width="29" height="1.3" fill="#d8cf8a"/>
<rect x="498.5" y="315.9" width="8.6" height="5.4" fill="#1a2a1e" stroke="#e0d870" stroke-width="1.6"/>
<path d="M501.2,315.1 l-0.8,-2 M504.4,315.1 l0.8,-2" fill="none" stroke="#e0d870" stroke-width="0.8" opacity="0.3"/>
<rect x="511" y="311.6" width="49" height="12.6" fill="#1e1e1a" stroke="#3a3a30" stroke-width="1"/>
<text x="535.5" y="320.8" font-size="8.5" fill="#5e5a44" font-weight="normal" text-anchor="middle" textLength="40" lengthAdjust="spacingAndGlyphs">SEQ/MEnv2</text>
<rect x="564.0999999999999" y="315.9" width="8.6" height="5.4" fill="#1a2a1e" stroke="#e0d870" stroke-width="1.6"/>
<path d="M566.8,315.1 l-0.8,-2 M570.0,315.1 l0.8,-2" fill="none" stroke="#e0d870" stroke-width="0.8" opacity="0.3"/>
<rect x="576" y="311.6" width="49" height="12.6" fill="#1e1e1a" stroke="#3a3a30" stroke-width="1"/>
<text x="600.5" y="320.8" font-size="8.5" fill="#5e5a44" font-weight="normal" text-anchor="middle" textLength="40" lengthAdjust="spacingAndGlyphs">SEQ/MEnv3</text>
<rect x="629.0999999999999" y="315.9" width="8.6" height="5.4" fill="#1a2a1e" stroke="#e0d870" stroke-width="1.6"/>
<path d="M631.8,315.1 l-0.8,-2 M635.0,315.1 l0.8,-2" fill="none" stroke="#e0d870" stroke-width="0.8" opacity="0.3"/>
<rect x="646.3" y="311.6" width="35.0" height="12.6" fill="#1e1c1e" stroke="#4a363e" stroke-width="1"/>
<text x="663.8" y="320.8" font-size="9" fill="#a87888" font-weight="bold" text-anchor="middle" textLength="18.8" lengthAdjust="spacingAndGlyphs">Env1</text>
<rect x="683.8" y="311.6" width="35.0" height="12.6" fill="#1e1c1e" stroke="#4a363e" stroke-width="1"/>
<text x="701.3" y="320.8" font-size="9" fill="#a87888" font-weight="bold" text-anchor="middle" textLength="18.8" lengthAdjust="spacingAndGlyphs">Env2</text>
<rect x="722.5" y="311.6" width="34.5" height="12.6" fill="#1e1c1e" stroke="#4a363e" stroke-width="1"/>
<text x="739.75" y="320.8" font-size="9" fill="#a87888" font-weight="bold" text-anchor="middle" textLength="18.8" lengthAdjust="spacingAndGlyphs">Env3</text>
<rect x="760" y="311.6" width="34.5" height="12.6" fill="#1e1c1e" stroke="#4a363e" stroke-width="1"/>
<text x="777.25" y="320.8" font-size="9" fill="#a87888" font-weight="bold" text-anchor="middle" textLength="18.8" lengthAdjust="spacingAndGlyphs">Env4</text>
<rect x="0" y="329.3" width="2" height="145" fill="#333"/>
<rect x="1.5" y="461.3" width="58" height="0.9" fill="#4a4a4a"/>
<rect x="1.3" y="461.3" width="0.9" height="13" fill="#4a4a4a"/>
<rect x="0" y="351.5" width="59.5" height="109.5" fill="#232323"/>
<rect x="5" y="360.4" width="50.7" height="17.6" fill="#4a5257"/>
<text x="30.3" y="372.3" font-size="9.2" fill="#eef2f4" font-weight="bold" text-anchor="middle" textLength="41" lengthAdjust="spacingAndGlyphs">KEYBOARD</text>
<text x="30.3" y="392.7" font-size="8.2" fill="#7c7c7c" font-weight="bold" text-anchor="middle" textLength="29" lengthAdjust="spacingAndGlyphs">MIDI FX</text>
<text x="30.3" y="413.7" font-size="8.2" fill="#7c7c7c" font-weight="bold" text-anchor="middle" textLength="37" lengthAdjust="spacingAndGlyphs">AUDIO FX</text>
<text x="30.3" y="434.4" font-size="8.2" fill="#7c7c7c" font-weight="bold" text-anchor="middle" textLength="36" lengthAdjust="spacingAndGlyphs">SETTINGS</text>
<rect x="27.2" y="449.8" width="5.8" height="4.6" fill="#6a6a6a"/>
<path d="M28.4,449.8 v-1.3 a1.7,1.7 0 0 1 3.4,0 v1.3" fill="none" stroke="#6a6a6a" stroke-width="1"/>
<rect x="72" y="349.8" width="59.6" height="35.5" fill="#212121" rx="2"/>
<text x="87.5" y="362.5" font-size="8" fill="#7a7a7a" font-weight="bold" text-anchor="middle" textLength="13" lengthAdjust="spacingAndGlyphs">PB -</text>
<text x="116.2" y="362.5" font-size="8" fill="#7a7a7a" font-weight="bold" text-anchor="middle" textLength="14" lengthAdjust="spacingAndGlyphs">PB +</text>
<text x="86.1" y="378" font-size="8.5" fill="#ececec" font-weight="bold" text-anchor="middle">2</text>
<text x="114.8" y="378" font-size="8.5" fill="#ececec" font-weight="bold" text-anchor="middle">2</text>
<rect x="72.4" y="391.6" width="60" height="70.4" fill="#212121" rx="2"/>
<circle cx="101.6" cy="411.4" r="15.3" fill="none" stroke="#40302c" stroke-width="1"/>
<circle cx="101.6" cy="411.4" r="10" fill="#3a3a3a" stroke="#2a2a2a" stroke-width="1"/>
<line x1="96.3" y1="419.8" x2="100.9" y2="415" stroke="#f0f0f0" stroke-width="3.2" stroke-linecap="round"/>
<text x="101.6" y="432.6" font-size="7.5" fill="#e8e8e8" font-weight="bold" text-anchor="middle" textLength="34" lengthAdjust="spacingAndGlyphs">Portamento</text>
<circle cx="93" cy="440.3" r="3" fill="none" stroke="#666" stroke-width="1.5"/>
<circle cx="110.8" cy="440.3" r="3" fill="none" stroke="#666" stroke-width="1.5"/>
<text x="90.2" y="458" font-size="9.5" fill="#525252" font-weight="bold" text-anchor="middle" textLength="16.5" lengthAdjust="spacingAndGlyphs">Rate</text>
<text x="113.8" y="458" font-size="9.5" fill="#f4f4f4" font-weight="bold" text-anchor="middle" textLength="18.5" lengthAdjust="spacingAndGlyphs">Time</text>
<rect x="143.2" y="347.7" width="24.7" height="117" fill="#2a2a2a" stroke="#353535" stroke-width="1"/>
<text x="155.5" y="360" font-size="6.5" fill="#5a5a5a" font-weight="normal" text-anchor="middle">PB</text>
<rect x="144.5" y="405.6" width="22" height="1.6" fill="#e6e6e6"/>
<rect x="174.7" y="347.7" width="25.5" height="117" fill="#2a2a2a" stroke="#353535" stroke-width="1"/>
<text x="187.4" y="360" font-size="6.5" fill="#5a5a5a" font-weight="normal" text-anchor="middle">MW</text>
<rect x="176" y="462.3" width="23" height="1.6" fill="#e6e6e6"/>
<rect x="211.2" y="344.6" width="570.3" height="123.69999999999999" fill="#111"/>
<rect x="212.20" y="345.6" width="14.24" height="121.89999999999999" fill="#ececec"/>
<rect x="228.04" y="345.6" width="14.24" height="121.89999999999999" fill="#ececec"/>
<rect x="243.88" y="345.6" width="14.24" height="121.89999999999999" fill="#ececec"/>
<rect x="259.72" y="345.6" width="14.24" height="121.89999999999999" fill="#ececec"/>
<rect x="275.57" y="345.6" width="14.24" height="121.89999999999999" fill="#ececec"/>
<rect x="291.41" y="345.6" width="14.24" height="121.89999999999999" fill="#ececec"/>
<rect x="307.25" y="345.6" width="14.24" height="121.89999999999999" fill="#ececec"/>
<rect x="323.09" y="345.6" width="14.24" height="121.89999999999999" fill="#ececec"/>
<rect x="338.93" y="345.6" width="14.24" height="121.89999999999999" fill="#ececec"/>
<rect x="354.77" y="345.6" width="14.24" height="121.89999999999999" fill="#ececec"/>
<rect x="370.62" y="345.6" width="14.24" height="121.89999999999999" fill="#ececec"/>
<rect x="386.46" y="345.6" width="14.24" height="121.89999999999999" fill="#ececec"/>
<rect x="402.30" y="345.6" width="14.24" height="121.89999999999999" fill="#ececec"/>
<rect x="418.14" y="345.6" width="14.24" height="121.89999999999999" fill="#ececec"/>
<rect x="433.98" y="345.6" width="14.24" height="121.89999999999999" fill="#ececec"/>
<rect x="449.82" y="345.6" width="14.24" height="121.89999999999999" fill="#ececec"/>
<rect x="465.67" y="345.6" width="14.24" height="121.89999999999999" fill="#ececec"/>
<rect x="481.51" y="345.6" width="14.24" height="121.89999999999999" fill="#ececec"/>
<rect x="497.35" y="345.6" width="14.24" height="121.89999999999999" fill="#ececec"/>
<rect x="513.19" y="345.6" width="14.24" height="121.89999999999999" fill="#ececec"/>
<rect x="529.03" y="345.6" width="14.24" height="121.89999999999999" fill="#ececec"/>
<rect x="544.88" y="345.6" width="14.24" height="121.89999999999999" fill="#ececec"/>
<rect x="560.72" y="345.6" width="14.24" height="121.89999999999999" fill="#ececec"/>
<rect x="576.56" y="345.6" width="14.24" height="121.89999999999999" fill="#ececec"/>
<rect x="592.40" y="345.6" width="14.24" height="121.89999999999999" fill="#ececec"/>
<rect x="608.24" y="345.6" width="14.24" height="121.89999999999999" fill="#ececec"/>
<rect x="624.08" y="345.6" width="14.24" height="121.89999999999999" fill="#ececec"/>
<rect x="639.92" y="345.6" width="14.24" height="121.89999999999999" fill="#ececec"/>
<rect x="655.77" y="345.6" width="14.24" height="121.89999999999999" fill="#ececec"/>
<rect x="671.61" y="345.6" width="14.24" height="121.89999999999999" fill="#ececec"/>
<rect x="687.45" y="345.6" width="14.24" height="121.89999999999999" fill="#ececec"/>
<rect x="703.29" y="345.6" width="14.24" height="121.89999999999999" fill="#ececec"/>
<rect x="719.13" y="345.6" width="14.24" height="121.89999999999999" fill="#ececec"/>
<rect x="734.97" y="345.6" width="14.24" height="121.89999999999999" fill="#ececec"/>
<rect x="750.82" y="345.6" width="14.24" height="121.89999999999999" fill="#ececec"/>
<rect x="766.66" y="345.6" width="14.24" height="121.89999999999999" fill="#ececec"/>
<rect x="221.06" y="344.6" width="10.60" height="79.79999999999995" fill="#111"/>
<rect x="222.36" y="345.6" width="8.00" height="70.0" fill="#474747"/>
<rect x="239.54" y="344.6" width="10.60" height="79.79999999999995" fill="#111"/>
<rect x="240.84" y="345.6" width="8.00" height="70.0" fill="#474747"/>
<rect x="267.27" y="344.6" width="10.60" height="79.79999999999995" fill="#111"/>
<rect x="268.57" y="345.6" width="8.00" height="70.0" fill="#474747"/>
<rect x="285.75" y="344.6" width="10.60" height="79.79999999999995" fill="#111"/>
<rect x="287.05" y="345.6" width="8.00" height="70.0" fill="#474747"/>
<rect x="304.23" y="344.6" width="10.60" height="79.79999999999995" fill="#111"/>
<rect x="305.53" y="345.6" width="8.00" height="70.0" fill="#474747"/>
<rect x="331.95" y="344.6" width="10.60" height="79.79999999999995" fill="#111"/>
<rect x="333.25" y="345.6" width="8.00" height="70.0" fill="#474747"/>
<rect x="350.44" y="344.6" width="10.60" height="79.79999999999995" fill="#111"/>
<rect x="351.74" y="345.6" width="8.00" height="70.0" fill="#474747"/>
<rect x="378.16" y="344.6" width="10.60" height="79.79999999999995" fill="#111"/>
<rect x="379.46" y="345.6" width="8.00" height="70.0" fill="#474747"/>
<rect x="396.64" y="344.6" width="10.60" height="79.79999999999995" fill="#111"/>
<rect x="397.94" y="345.6" width="8.00" height="70.0" fill="#474747"/>
<rect x="415.12" y="344.6" width="10.60" height="79.79999999999995" fill="#111"/>
<rect x="416.42" y="345.6" width="8.00" height="70.0" fill="#474747"/>
<rect x="442.84" y="344.6" width="10.60" height="79.79999999999995" fill="#111"/>
<rect x="444.14" y="345.6" width="8.00" height="70.0" fill="#474747"/>
<rect x="461.33" y="344.6" width="10.60" height="79.79999999999995" fill="#111"/>
<rect x="462.63" y="345.6" width="8.00" height="70.0" fill="#474747"/>
<rect x="489.05" y="344.6" width="10.60" height="79.79999999999995" fill="#111"/>
<rect x="490.35" y="345.6" width="8.00" height="70.0" fill="#474747"/>
<rect x="507.53" y="344.6" width="10.60" height="79.79999999999995" fill="#111"/>
<rect x="508.83" y="345.6" width="8.00" height="70.0" fill="#474747"/>
<rect x="526.01" y="344.6" width="10.60" height="79.79999999999995" fill="#111"/>
<rect x="527.31" y="345.6" width="8.00" height="70.0" fill="#474747"/>
<rect x="553.74" y="344.6" width="10.60" height="79.79999999999995" fill="#111"/>
<rect x="555.04" y="345.6" width="8.00" height="70.0" fill="#474747"/>
<rect x="572.22" y="344.6" width="10.60" height="79.79999999999995" fill="#111"/>
<rect x="573.52" y="345.6" width="8.00" height="70.0" fill="#474747"/>
<rect x="599.94" y="344.6" width="10.60" height="79.79999999999995" fill="#111"/>
<rect x="601.24" y="345.6" width="8.00" height="70.0" fill="#474747"/>
<rect x="618.42" y="344.6" width="10.60" height="79.79999999999995" fill="#111"/>
<rect x="619.72" y="345.6" width="8.00" height="70.0" fill="#474747"/>
<rect x="636.91" y="344.6" width="10.60" height="79.79999999999995" fill="#111"/>
<rect x="638.21" y="345.6" width="8.00" height="70.0" fill="#474747"/>
<rect x="664.63" y="344.6" width="10.60" height="79.79999999999995" fill="#111"/>
<rect x="665.93" y="345.6" width="8.00" height="70.0" fill="#474747"/>
<rect x="683.11" y="344.6" width="10.60" height="79.79999999999995" fill="#111"/>
<rect x="684.41" y="345.6" width="8.00" height="70.0" fill="#474747"/>
<rect x="710.83" y="344.6" width="10.60" height="79.79999999999995" fill="#111"/>
<rect x="712.13" y="345.6" width="8.00" height="70.0" fill="#474747"/>
<rect x="729.31" y="344.6" width="10.60" height="79.79999999999995" fill="#111"/>
<rect x="730.61" y="345.6" width="8.00" height="70.0" fill="#474747"/>
<rect x="747.80" y="344.6" width="10.60" height="79.79999999999995" fill="#111"/>
<rect x="749.10" y="345.6" width="8.00" height="70.0" fill="#474747"/></svg></body></html>
